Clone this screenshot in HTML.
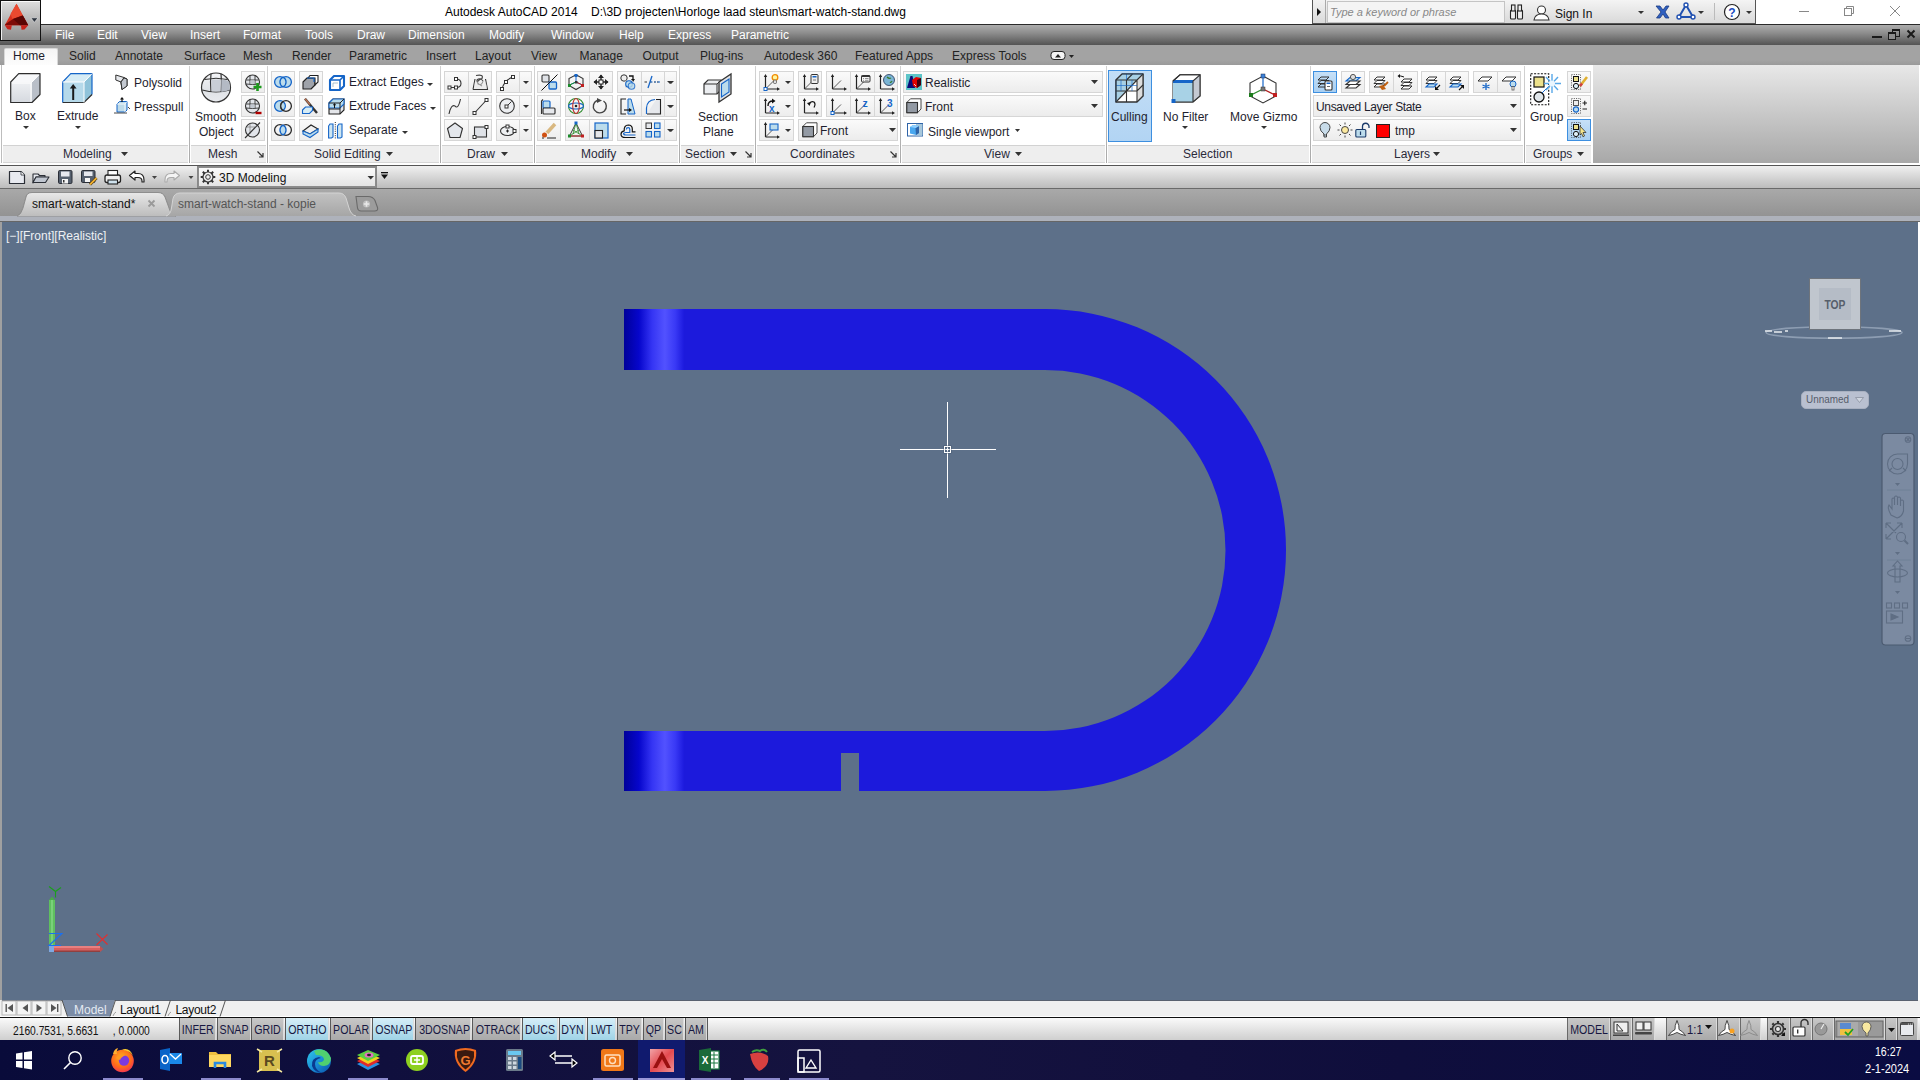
<!DOCTYPE html><html><head><meta charset="utf-8"><style>
*{margin:0;padding:0;box-sizing:border-box}
html,body{width:1920px;height:1080px;overflow:hidden;background:#5d7089;font-family:"Liberation Sans",sans-serif}
.t{position:absolute;white-space:nowrap;line-height:1}
</style></head><body><div style="position:absolute;left:0px;top:0px;width:1920px;height:24px;background:#fff"></div>
<div class="t" style="left:445px;top:6px;font-size:12px;color:#000;">Autodesk AutoCAD 2014&nbsp;&nbsp;&nbsp;&nbsp;D:\3D projecten\Horloge laad steun\smart-watch-stand.dwg</div>
<div style="position:absolute;left:0px;top:24px;width:1920px;height:1px;background:#2a2a2a"></div>
<div style="position:absolute;left:0px;top:25px;width:1920px;height:20px;background:linear-gradient(#adadad,#8d8d8d 40%,#545454)"></div>
<div style="position:absolute;left:0px;top:45px;width:1920px;height:20px;background:linear-gradient(#a3a3a3 75%,#9a9a9a)"></div>
<div style="position:absolute;left:0px;top:65px;width:1593px;height:98px;background:#fff"></div>
<div style="position:absolute;left:1593px;top:65px;width:326px;height:98px;background:linear-gradient(#e8e8e8,#a8a8a8)"></div>
<div style="position:absolute;left:1919px;top:65px;width:1px;height:98px;background:#fff"></div>
<div style="position:absolute;left:0px;top:163px;width:1920px;height:2px;background:#fff"></div>
<div style="position:absolute;left:0px;top:165px;width:1920px;height:1px;background:#555"></div>
<div style="position:absolute;left:0px;top:166px;width:1920px;height:22px;background:linear-gradient(#f0f0f0,#bcbcbc)"></div>
<div style="position:absolute;left:0px;top:188px;width:1920px;height:1px;background:#6a6a6a"></div>
<div style="position:absolute;left:0px;top:189px;width:1920px;height:27px;background:linear-gradient(#a9a9a9,#939393)"></div>
<div style="position:absolute;left:0px;top:216px;width:1920px;height:5px;background:#aeb2bb"></div>
<div style="position:absolute;left:0px;top:221px;width:1920px;height:1px;background:#666"></div>
<div style="position:absolute;left:0px;top:222px;width:2px;height:778px;background:#a0a0a0"></div>
<div style="position:absolute;left:1918px;top:222px;width:2px;height:778px;background:#fff"></div>
<div style="position:absolute;left:0px;top:1000px;width:1920px;height:17px;background:#f0f0f0"></div>
<div style="position:absolute;left:2px;top:1000px;width:1916px;height:1px;background:#5a6270"></div>
<div style="position:absolute;left:0px;top:1016px;width:1920px;height:1px;background:#fff"></div>
<div style="position:absolute;left:0px;top:1017px;width:1920px;height:1px;background:#111"></div>
<div style="position:absolute;left:0px;top:1018px;width:1920px;height:22px;background:linear-gradient(#fafafa,#cfcfcf)"></div>
<div style="position:absolute;left:0px;top:1040px;width:1920px;height:40px;background:linear-gradient(to right,#090b3a 0%,#100f3d 20%,#15133f 45%,#12103d 62%,#0f0e3c 73%,#0a0c42 100%)"></div>
<div style="position:absolute;left:0px;top:0px;width:41px;height:41px;background:#111"></div>
<div style="position:absolute;left:1px;top:1px;width:39px;height:39px;background:linear-gradient(#dcdcdc,#b4b4b4 50%,#8c8c8c);border-top:1px solid #fafafa;border-left:1px solid #f0f0f0"></div>
<svg style="position:absolute;left:0px;top:0px;" width="41" height="41" viewBox="0 0 41 41"><polygon points="16.5,3.8 28.2,25.2 4.8,25.2" fill="#d8301e"/><polygon points="16.5,3.8 22.6,15.3 12.5,19 10.5,14" fill="#ea4a30"/><polygon points="5.5,24 13,19 22.8,15.6 28.2,25.2 4.8,25.2" fill="#7e0c08"/><polygon points="13,19 22.8,15.6 28.2,25.2 20,25.2" fill="#5a0604"/><polygon points="4.8,25.2 11.8,25.2 11,29.8 7.5,29.3" fill="#c8221a"/><polygon points="21,25.2 28.2,25.2 24.5,29.5 21.5,29.8" fill="#c8221a"/><polygon points="30.8,17.8 38,17.8 34.4,22.4" fill="#2e3540" stroke="#f4f4f4" stroke-width="0.6"/></svg>
<div class="t" style="left:55px;top:29px;font-size:12px;color:#fff;">File</div>
<div class="t" style="left:97px;top:29px;font-size:12px;color:#fff;">Edit</div>
<div class="t" style="left:141px;top:29px;font-size:12px;color:#fff;">View</div>
<div class="t" style="left:190px;top:29px;font-size:12px;color:#fff;">Insert</div>
<div class="t" style="left:243px;top:29px;font-size:12px;color:#fff;">Format</div>
<div class="t" style="left:305px;top:29px;font-size:12px;color:#fff;">Tools</div>
<div class="t" style="left:357px;top:29px;font-size:12px;color:#fff;">Draw</div>
<div class="t" style="left:408px;top:29px;font-size:12px;color:#fff;">Dimension</div>
<div class="t" style="left:489px;top:29px;font-size:12px;color:#fff;">Modify</div>
<div class="t" style="left:551px;top:29px;font-size:12px;color:#fff;">Window</div>
<div class="t" style="left:619px;top:29px;font-size:12px;color:#fff;">Help</div>
<div class="t" style="left:668px;top:29px;font-size:12px;color:#fff;">Express</div>
<div class="t" style="left:731px;top:29px;font-size:12px;color:#fff;">Parametric</div>
<svg style="position:absolute;left:1870px;top:28px;" width="48" height="16" viewBox="0 0 48 16"><rect x="2" y="8" width="10" height="2" fill="#1a1a1a"/><rect x="22.5" y="1.5" width="7" height="7" fill="none" stroke="#1a1a1a" stroke-width="1"/><rect x="22" y="1" width="8" height="2" fill="#1a1a1a"/><rect x="18.5" y="4.5" width="7" height="7" fill="#8e8e8e" stroke="#1a1a1a" stroke-width="1"/><rect x="18" y="4" width="8" height="2" fill="#1a1a1a"/><path d="M37.5 2.5 L44.5 9.5 M44.5 2.5 L37.5 9.5" stroke="#1a1a1a" stroke-width="2"/></svg>
<div style="position:absolute;left:4px;top:48px;width:54px;height:17px;background:linear-gradient(#f4f4f4,#fdfdfd);border:1px solid #d8d8d8;border-bottom:none;border-radius:2px 2px 0 0"></div>
<div class="t" style="left:13px;top:50px;font-size:12px;color:#1b1b2b;">Home</div>
<div class="t" style="left:69px;top:50px;font-size:12px;color:#222;">Solid</div>
<div class="t" style="left:115px;top:50px;font-size:12px;color:#222;">Annotate</div>
<div class="t" style="left:184px;top:50px;font-size:12px;color:#222;">Surface</div>
<div class="t" style="left:243px;top:50px;font-size:12px;color:#222;">Mesh</div>
<div class="t" style="left:292px;top:50px;font-size:12px;color:#222;">Render</div>
<div class="t" style="left:349px;top:50px;font-size:12px;color:#222;">Parametric</div>
<div class="t" style="left:426px;top:50px;font-size:12px;color:#222;">Insert</div>
<div class="t" style="left:475px;top:50px;font-size:12px;color:#222;">Layout</div>
<div class="t" style="left:531px;top:50px;font-size:12px;color:#222;">View</div>
<div class="t" style="left:579.5px;top:50px;font-size:12px;color:#222;">Manage</div>
<div class="t" style="left:642.5px;top:50px;font-size:12px;color:#222;">Output</div>
<div class="t" style="left:700px;top:50px;font-size:12px;color:#222;">Plug-ins</div>
<div class="t" style="left:764px;top:50px;font-size:12px;color:#222;">Autodesk 360</div>
<div class="t" style="left:855px;top:50px;font-size:12px;color:#222;">Featured Apps</div>
<div class="t" style="left:952px;top:50px;font-size:12px;color:#222;">Express Tools</div>
<svg style="position:absolute;left:1050px;top:50px;" width="26" height="12" viewBox="0 0 26 12"><rect x="1" y="1.5" width="14" height="8" rx="3" fill="#f4f4f4" stroke="#222" stroke-width="1"/><polygon points="5,7.5 11,7.5 8,4" fill="#222"/><polygon points="19,5 24,5 21.5,8" fill="#222"/></svg>
<div style="position:absolute;left:3px;top:145px;width:185px;height:18px;background:#eeeeee;border-top:1px solid #d2d2d2;border-bottom:1px solid #d6d6d6"></div>
<div style="position:absolute;left:191px;top:145px;width:75px;height:18px;background:#eeeeee;border-top:1px solid #d2d2d2;border-bottom:1px solid #d6d6d6"></div>
<div style="position:absolute;left:269px;top:145px;width:170px;height:18px;background:#eeeeee;border-top:1px solid #d2d2d2;border-bottom:1px solid #d6d6d6"></div>
<div style="position:absolute;left:442px;top:145px;width:91px;height:18px;background:#eeeeee;border-top:1px solid #d2d2d2;border-bottom:1px solid #d6d6d6"></div>
<div style="position:absolute;left:536px;top:145px;width:142px;height:18px;background:#eeeeee;border-top:1px solid #d2d2d2;border-bottom:1px solid #d6d6d6"></div>
<div style="position:absolute;left:681px;top:145px;width:73px;height:18px;background:#eeeeee;border-top:1px solid #d2d2d2;border-bottom:1px solid #d6d6d6"></div>
<div style="position:absolute;left:757px;top:145px;width:142px;height:18px;background:#eeeeee;border-top:1px solid #d2d2d2;border-bottom:1px solid #d6d6d6"></div>
<div style="position:absolute;left:902px;top:145px;width:203px;height:18px;background:#eeeeee;border-top:1px solid #d2d2d2;border-bottom:1px solid #d6d6d6"></div>
<div style="position:absolute;left:1108px;top:145px;width:201px;height:18px;background:#eeeeee;border-top:1px solid #d2d2d2;border-bottom:1px solid #d6d6d6"></div>
<div style="position:absolute;left:1312px;top:145px;width:211px;height:18px;background:#eeeeee;border-top:1px solid #d2d2d2;border-bottom:1px solid #d6d6d6"></div>
<div style="position:absolute;left:1526px;top:145px;width:65px;height:18px;background:#eeeeee;border-top:1px solid #d2d2d2;border-bottom:1px solid #d6d6d6"></div>
<div style="position:absolute;left:189px;top:66px;width:1px;height:97px;background:linear-gradient(#d4d4d4,#a8a8a8)"></div>
<div style="position:absolute;left:267px;top:66px;width:1px;height:97px;background:linear-gradient(#d4d4d4,#a8a8a8)"></div>
<div style="position:absolute;left:440px;top:66px;width:1px;height:97px;background:linear-gradient(#d4d4d4,#a8a8a8)"></div>
<div style="position:absolute;left:534px;top:66px;width:1px;height:97px;background:linear-gradient(#d4d4d4,#a8a8a8)"></div>
<div style="position:absolute;left:679px;top:66px;width:1px;height:97px;background:linear-gradient(#d4d4d4,#a8a8a8)"></div>
<div style="position:absolute;left:755px;top:66px;width:1px;height:97px;background:linear-gradient(#d4d4d4,#a8a8a8)"></div>
<div style="position:absolute;left:900px;top:66px;width:1px;height:97px;background:linear-gradient(#d4d4d4,#a8a8a8)"></div>
<div style="position:absolute;left:1106px;top:66px;width:1px;height:97px;background:linear-gradient(#d4d4d4,#a8a8a8)"></div>
<div style="position:absolute;left:1310px;top:66px;width:1px;height:97px;background:linear-gradient(#d4d4d4,#a8a8a8)"></div>
<div style="position:absolute;left:1524px;top:66px;width:1px;height:97px;background:linear-gradient(#d4d4d4,#a8a8a8)"></div>
<div style="position:absolute;left:1px;top:65px;width:1px;height:98px;background:#bdbdbd"></div>
<div class="t" style="left:63px;top:148px;font-size:12px;color:#2a2a3a;">Modeling</div>
<svg style="position:absolute;left:121px;top:152px;" width="7" height="4" viewBox="0 0 7 4"><polygon points="0,0 7,0 3.5,4" fill="#333"/></svg>
<div class="t" style="left:208px;top:148px;font-size:12px;color:#2a2a3a;">Mesh</div>
<svg style="position:absolute;left:256px;top:150px;" width="9" height="9" viewBox="0 0 9 9"><path d="M1.5 1.5 L7 7 M7 3 V7 H3" stroke="#333" stroke-width="1.2" fill="none"/></svg>
<div class="t" style="left:314px;top:148px;font-size:12px;color:#2a2a3a;">Solid Editing</div>
<svg style="position:absolute;left:386px;top:152px;" width="7" height="4" viewBox="0 0 7 4"><polygon points="0,0 7,0 3.5,4" fill="#333"/></svg>
<div class="t" style="left:467px;top:148px;font-size:12px;color:#2a2a3a;">Draw</div>
<svg style="position:absolute;left:501px;top:152px;" width="7" height="4" viewBox="0 0 7 4"><polygon points="0,0 7,0 3.5,4" fill="#333"/></svg>
<div class="t" style="left:581px;top:148px;font-size:12px;color:#2a2a3a;">Modify</div>
<svg style="position:absolute;left:626px;top:152px;" width="7" height="4" viewBox="0 0 7 4"><polygon points="0,0 7,0 3.5,4" fill="#333"/></svg>
<div class="t" style="left:685px;top:148px;font-size:12px;color:#2a2a3a;">Section</div>
<svg style="position:absolute;left:730px;top:152px;" width="7" height="4" viewBox="0 0 7 4"><polygon points="0,0 7,0 3.5,4" fill="#333"/></svg>
<svg style="position:absolute;left:744px;top:150px;" width="9" height="9" viewBox="0 0 9 9"><path d="M1.5 1.5 L7 7 M7 3 V7 H3" stroke="#333" stroke-width="1.2" fill="none"/></svg>
<div class="t" style="left:790px;top:148px;font-size:12px;color:#2a2a3a;">Coordinates</div>
<svg style="position:absolute;left:889px;top:150px;" width="9" height="9" viewBox="0 0 9 9"><path d="M1.5 1.5 L7 7 M7 3 V7 H3" stroke="#333" stroke-width="1.2" fill="none"/></svg>
<div class="t" style="left:984px;top:148px;font-size:12px;color:#2a2a3a;">View</div>
<svg style="position:absolute;left:1015px;top:152px;" width="7" height="4" viewBox="0 0 7 4"><polygon points="0,0 7,0 3.5,4" fill="#333"/></svg>
<div class="t" style="left:1183px;top:148px;font-size:12px;color:#2a2a3a;">Selection</div>
<div class="t" style="left:1394px;top:148px;font-size:12px;color:#2a2a3a;">Layers</div>
<svg style="position:absolute;left:1433px;top:152px;" width="7" height="4" viewBox="0 0 7 4"><polygon points="0,0 7,0 3.5,4" fill="#333"/></svg>
<div class="t" style="left:1533px;top:148px;font-size:12px;color:#2a2a3a;">Groups</div>
<svg style="position:absolute;left:1577px;top:152px;" width="7" height="4" viewBox="0 0 7 4"><polygon points="0,0 7,0 3.5,4" fill="#333"/></svg>
<div style="position:absolute;left:241px;top:71px;width:24px;height:22px;background:linear-gradient(#fafafa,#ededed);border:1px solid #d6d6d6"></div>
<div style="position:absolute;left:241px;top:95px;width:24px;height:22px;background:linear-gradient(#fafafa,#ededed);border:1px solid #d6d6d6"></div>
<div style="position:absolute;left:241px;top:119px;width:24px;height:22px;background:linear-gradient(#fafafa,#ededed);border:1px solid #d6d6d6"></div>
<div style="position:absolute;left:271px;top:71px;width:24px;height:22px;background:linear-gradient(#fafafa,#ededed);border:1px solid #d6d6d6"></div>
<div style="position:absolute;left:299px;top:71px;width:24px;height:22px;background:linear-gradient(#fafafa,#ededed);border:1px solid #d6d6d6"></div>
<div style="position:absolute;left:271px;top:95px;width:24px;height:22px;background:linear-gradient(#fafafa,#ededed);border:1px solid #d6d6d6"></div>
<div style="position:absolute;left:299px;top:95px;width:24px;height:22px;background:linear-gradient(#fafafa,#ededed);border:1px solid #d6d6d6"></div>
<div style="position:absolute;left:271px;top:119px;width:24px;height:22px;background:linear-gradient(#fafafa,#ededed);border:1px solid #d6d6d6"></div>
<div style="position:absolute;left:299px;top:119px;width:24px;height:22px;background:linear-gradient(#fafafa,#ededed);border:1px solid #d6d6d6"></div>
<div style="position:absolute;left:444px;top:71px;width:48px;height:22px;background:linear-gradient(#fafafa,#ededed);border:1px solid #d6d6d6"></div>
<div style="position:absolute;left:468px;top:72px;width:1px;height:20px;background:#d6d6d6"></div>
<div style="position:absolute;left:496px;top:71px;width:36px;height:22px;background:linear-gradient(#fafafa,#ededed);border:1px solid #d6d6d6"></div>
<div style="position:absolute;left:519px;top:72px;width:1px;height:20px;background:#d6d6d6"></div>
<div style="position:absolute;left:444px;top:95px;width:48px;height:22px;background:linear-gradient(#fafafa,#ededed);border:1px solid #d6d6d6"></div>
<div style="position:absolute;left:468px;top:96px;width:1px;height:20px;background:#d6d6d6"></div>
<div style="position:absolute;left:496px;top:95px;width:36px;height:22px;background:linear-gradient(#fafafa,#ededed);border:1px solid #d6d6d6"></div>
<div style="position:absolute;left:519px;top:96px;width:1px;height:20px;background:#d6d6d6"></div>
<div style="position:absolute;left:444px;top:119px;width:48px;height:22px;background:linear-gradient(#fafafa,#ededed);border:1px solid #d6d6d6"></div>
<div style="position:absolute;left:468px;top:120px;width:1px;height:20px;background:#d6d6d6"></div>
<div style="position:absolute;left:496px;top:119px;width:36px;height:22px;background:linear-gradient(#fafafa,#ededed);border:1px solid #d6d6d6"></div>
<div style="position:absolute;left:519px;top:120px;width:1px;height:20px;background:#d6d6d6"></div>
<div style="position:absolute;left:537px;top:71px;width:24px;height:22px;background:linear-gradient(#fafafa,#ededed);border:1px solid #d6d6d6"></div>
<div style="position:absolute;left:565px;top:71px;width:48px;height:22px;background:linear-gradient(#fafafa,#ededed);border:1px solid #d6d6d6"></div>
<div style="position:absolute;left:589px;top:72px;width:1px;height:20px;background:#d6d6d6"></div>
<div style="position:absolute;left:617px;top:71px;width:60px;height:22px;background:linear-gradient(#fafafa,#ededed);border:1px solid #d6d6d6"></div>
<div style="position:absolute;left:641px;top:72px;width:1px;height:20px;background:#d6d6d6"></div>
<div style="position:absolute;left:664px;top:72px;width:1px;height:20px;background:#d6d6d6"></div>
<div style="position:absolute;left:537px;top:95px;width:24px;height:22px;background:linear-gradient(#fafafa,#ededed);border:1px solid #d6d6d6"></div>
<div style="position:absolute;left:565px;top:95px;width:48px;height:22px;background:linear-gradient(#fafafa,#ededed);border:1px solid #d6d6d6"></div>
<div style="position:absolute;left:589px;top:96px;width:1px;height:20px;background:#d6d6d6"></div>
<div style="position:absolute;left:617px;top:95px;width:60px;height:22px;background:linear-gradient(#fafafa,#ededed);border:1px solid #d6d6d6"></div>
<div style="position:absolute;left:641px;top:96px;width:1px;height:20px;background:#d6d6d6"></div>
<div style="position:absolute;left:664px;top:96px;width:1px;height:20px;background:#d6d6d6"></div>
<div style="position:absolute;left:537px;top:119px;width:24px;height:22px;background:linear-gradient(#fafafa,#ededed);border:1px solid #d6d6d6"></div>
<div style="position:absolute;left:565px;top:119px;width:48px;height:22px;background:linear-gradient(#fafafa,#ededed);border:1px solid #d6d6d6"></div>
<div style="position:absolute;left:589px;top:120px;width:1px;height:20px;background:#d6d6d6"></div>
<div style="position:absolute;left:617px;top:119px;width:60px;height:22px;background:linear-gradient(#fafafa,#ededed);border:1px solid #d6d6d6"></div>
<div style="position:absolute;left:641px;top:120px;width:1px;height:20px;background:#d6d6d6"></div>
<div style="position:absolute;left:664px;top:120px;width:1px;height:20px;background:#d6d6d6"></div>
<div style="position:absolute;left:759px;top:71px;width:35px;height:22px;background:linear-gradient(#fafafa,#ededed);border:1px solid #d6d6d6"></div>
<div style="position:absolute;left:759px;top:95px;width:35px;height:22px;background:linear-gradient(#fafafa,#ededed);border:1px solid #d6d6d6"></div>
<div style="position:absolute;left:759px;top:119px;width:35px;height:22px;background:linear-gradient(#fafafa,#ededed);border:1px solid #d6d6d6"></div>
<div style="position:absolute;left:798px;top:71px;width:24px;height:22px;background:linear-gradient(#fafafa,#ededed);border:1px solid #d6d6d6"></div>
<div style="position:absolute;left:826px;top:71px;width:72px;height:22px;background:linear-gradient(#fafafa,#ededed);border:1px solid #d6d6d6"></div>
<div style="position:absolute;left:850px;top:72px;width:1px;height:20px;background:#d6d6d6"></div>
<div style="position:absolute;left:874px;top:72px;width:1px;height:20px;background:#d6d6d6"></div>
<div style="position:absolute;left:798px;top:95px;width:24px;height:22px;background:linear-gradient(#fafafa,#ededed);border:1px solid #d6d6d6"></div>
<div style="position:absolute;left:826px;top:95px;width:72px;height:22px;background:linear-gradient(#fafafa,#ededed);border:1px solid #d6d6d6"></div>
<div style="position:absolute;left:850px;top:96px;width:1px;height:20px;background:#d6d6d6"></div>
<div style="position:absolute;left:874px;top:96px;width:1px;height:20px;background:#d6d6d6"></div>
<div style="position:absolute;left:798px;top:119px;width:100px;height:22px;background:linear-gradient(#fafafa,#ececec);border:1px solid #d6d6d6"></div>
<div style="position:absolute;left:903px;top:71px;width:200px;height:22px;background:linear-gradient(#fafafa,#ececec);border:1px solid #d6d6d6"></div>
<div style="position:absolute;left:903px;top:95px;width:200px;height:22px;background:linear-gradient(#fafafa,#ececec);border:1px solid #d6d6d6"></div>
<div style="position:absolute;left:1313px;top:71px;width:24px;height:22px;background:linear-gradient(#c6e0f7,#a9cff1);border:1px solid #3d8fe0"></div>
<div style="position:absolute;left:1341px;top:71px;width:24px;height:22px;background:linear-gradient(#fafafa,#ededed);border:1px solid #d6d6d6"></div>
<div style="position:absolute;left:1369px;top:71px;width:49px;height:22px;background:linear-gradient(#fafafa,#ededed);border:1px solid #d6d6d6"></div>
<div style="position:absolute;left:1393px;top:72px;width:1px;height:20px;background:#d6d6d6"></div>
<div style="position:absolute;left:1421px;top:71px;width:48px;height:22px;background:linear-gradient(#fafafa,#ededed);border:1px solid #d6d6d6"></div>
<div style="position:absolute;left:1445px;top:72px;width:1px;height:20px;background:#d6d6d6"></div>
<div style="position:absolute;left:1473px;top:71px;width:48px;height:22px;background:linear-gradient(#fafafa,#ededed);border:1px solid #d6d6d6"></div>
<div style="position:absolute;left:1497px;top:72px;width:1px;height:20px;background:#d6d6d6"></div>
<div style="position:absolute;left:1313px;top:95px;width:208px;height:22px;background:linear-gradient(#fafafa,#ececec);border:1px solid #d6d6d6"></div>
<div style="position:absolute;left:1313px;top:119px;width:208px;height:22px;background:linear-gradient(#fafafa,#ececec);border:1px solid #d6d6d6"></div>
<div style="position:absolute;left:1567px;top:71px;width:24px;height:22px;background:linear-gradient(#fafafa,#ededed);border:1px solid #d6d6d6"></div>
<div style="position:absolute;left:1567px;top:95px;width:24px;height:22px;background:linear-gradient(#fafafa,#ededed);border:1px solid #d6d6d6"></div>
<div style="position:absolute;left:1567px;top:119px;width:24px;height:22px;background:linear-gradient(#c6e0f7,#a9cff1);border:1px solid #3d8fe0"></div>
<div style="position:absolute;left:1108px;top:70px;width:44px;height:72px;background:linear-gradient(#c3def6,#b2d4f3);border:1px solid #3d8fe0"></div>
<svg style="position:absolute;left:0;top:0" width="1920" height="1080"><g transform="translate(10,73) scale(1)"><defs><linearGradient id="bf" x1="0" y1="0" x2="0" y2="1"><stop offset="0" stop-color="#eef0f3"/><stop offset="1" stop-color="#d5d9df"/></linearGradient></defs><polygon points="0.7,9 8.7,0.7 30,0.7 22,9" fill="#f7f8fa"/><polygon points="22,9 30,0.7 30,21.5 22,29.5" fill="#b9bfc8"/><rect x="0.7" y="9" width="21.3" height="20.5" fill="url(#bf)"/><path d="M1.8 10 H21 V28.5 M21 10 L28.8 2" fill="none" stroke="#fff" stroke-width="1"/><path d="M0.7 9 L8.7 0.7 H30 V21.5 L22 29.5 H0.7 Z" fill="none" stroke="#2e2e2e" stroke-width="1.2" stroke-linejoin="round"/></g><g transform="translate(62,73) scale(1)"><polygon points="0.7,9 8.7,0.7 30,0.7 22,9" fill="#d6ecf5"/><polygon points="22,9 30,0.7 30,21.5 22,29.5" fill="#8fc3da"/><rect x="0.7" y="9" width="21.3" height="20.5" fill="#b5d9ea"/><path d="M0.7 29.5 V9 L8.7 0.7 H30 V21.5" fill="none" stroke="#1565c8" stroke-width="1.2" stroke-linejoin="round"/><path d="M30 21.5 L22 29.5 H0.7" fill="none" stroke="#2e2e2e" stroke-width="1.2"/><path d="M0.7 9 H22 V29.5 M22 9 L30 0.7" fill="none" stroke="#fff" stroke-width="1"/><path fill="none" d="M11.2 27 V14" stroke="#1a1a1a" stroke-width="2"/><polygon points="7.8,15.5 11.2,11 14.6,15.5" fill="#1a1a1a"/></g><g transform="translate(115,74) scale(1)"><polygon points="0.8,1 9,3.5 12,5 12,12 7,15.5 6,8 0.8,6" fill="#e6e8ec" stroke="#333" stroke-width="1" stroke-linejoin="round"/><path d="M6 8 L9 3.5 M6 8 L7 15.5" stroke="#333" stroke-width="1" fill="none"/><polygon points="6,8 9,4 12,5 12,12 7,15.5" fill="#c4c9d1" stroke="#333" stroke-width="1"/></g><g transform="translate(114,97) scale(1)"><polygon points="3,7 5.5,4.5 13,4.5 13,13 11,15 3,15" fill="#bfdbe9" stroke="#1565c8" stroke-width="1"/><path d="M3 7 H11 V15 M11 7 L13 4.5" stroke="#fff" stroke-width="0.8" fill="none"/><path fill="none" d="M0 16 H13 M14 10 L16 12" stroke="#333" stroke-width="0.9"/><path fill="none" d="M8 5 V1.5" stroke="#111" stroke-width="1.2"/><polygon points="6,2.6 8,0 10,2.6" fill="#111"/></g><g transform="translate(201,72) scale(1)"><defs><linearGradient id="sg" x1="0" y1="0" x2="0" y2="1"><stop offset="0" stop-color="#f4f5f7"/><stop offset="0.6" stop-color="#dfe2e6"/><stop offset="1" stop-color="#e8eaee"/></linearGradient></defs><circle cx="15" cy="15.5" r="14.5" fill="url(#sg)" stroke="#333" stroke-width="1.2"/><path d="M1.2 18 Q15 22 28.8 18" stroke="#333" stroke-width="1.2" fill="none"/><path d="M3.5 7.5 Q15 5 26.5 7.5" stroke="#333" stroke-width="1" fill="none"/><path d="M10 1.8 Q9 10 10 20 M20 1.8 Q21 10 20 20" stroke="#333" stroke-width="1.2" fill="none"/><rect x="10.5" y="7.5" width="9" height="12" fill="#c9ced6"/><path d="M20.3 7.6 Q26 8 28.5 10 L28.6 18 Q24 19.5 20.3 20 Z" fill="#b4bac4"/></g><g transform="translate(245,74) scale(1)"><circle cx="7.5" cy="8" r="7" fill="#e2e5ea" stroke="#333" stroke-width="1.1"/><path d="M0.8 6 H14 M0.8 10 Q7.5 11 14.2 10 M5 1.5 V10.5 M10 1.5 V10.5" stroke="#333" stroke-width="0.9" fill="none"/><rect x="5.3" y="6.3" width="4.4" height="3.6" fill="#c2c8d0"/><path fill="none" d="M12.5 9 V17 M8.5 13 H16.5" stroke="#1d9a1d" stroke-width="2.6"/></g><g transform="translate(245,98) scale(1)"><circle cx="7.5" cy="8" r="7" fill="#e2e5ea" stroke="#333" stroke-width="1.1"/><path d="M0.8 6 H14 M0.8 10 Q7.5 11 14.2 10 M5 1.5 V10.5 M10 1.5 V10.5" stroke="#333" stroke-width="0.9" fill="none"/><rect x="5.3" y="6.3" width="4.4" height="3.6" fill="#c2c8d0"/><path fill="none" d="M10.5 15 H16.5" stroke="#b00000" stroke-width="2.4"/></g><g transform="translate(245,122) scale(1)"><circle cx="7.5" cy="8" r="7" fill="#e2e5ea" stroke="#333" stroke-width="1.1"/><path fill="none" d="M5 1.5 V12 M2 5 H10" stroke="#888" stroke-width="0.8"/><path fill="none" d="M0 16 L15 0.5" stroke="#333" stroke-width="1.1"/></g><g transform="translate(271,74) scale(1)"><circle cx="9" cy="8" r="5.4" fill="#bcdcec" stroke="#1565c8" stroke-width="1.3"/><circle cx="15" cy="8" r="5.4" fill="#bcdcec" stroke="#1565c8" stroke-width="1.3"/><path d="M12 3.2 A5.3 5.3 0 0 1 12 12.8 A5.3 5.3 0 0 1 12 3.2 Z" fill="#bcdcec" stroke="#1565c8" stroke-width="1.3"/></g><g transform="translate(271,98) scale(1)"><circle cx="9" cy="8" r="5.4" fill="#bcdcec" stroke="#1565c8" stroke-width="1.3"/><circle cx="15" cy="8" r="5.4" fill="none" stroke="#2b2b2b" stroke-width="1.3"/><path d="M12 3.4 A5.4 5.4 0 0 0 12 12.6" stroke="#333" stroke-width="1.2" fill="none"/></g><g transform="translate(271,122) scale(1)"><circle cx="9" cy="8" r="5.4" fill="none" stroke="#2b2b2b" stroke-width="1.3"/><circle cx="15" cy="8" r="5.4" fill="none" stroke="#2b2b2b" stroke-width="1.3"/><path d="M12 3.2 A5.3 5.3 0 0 1 12 12.8 A5.3 5.3 0 0 1 12 3.2 Z" fill="#bcdcec" stroke="#1565c8" stroke-width="1.3"/></g><g transform="translate(302,74) scale(1)"><polygon points="1,8 5,4 13,4 13,11 9,15 1,15" fill="#9fa3aa" stroke="#222" stroke-width="1.1" stroke-linejoin="round"/><polygon points="6,4 8,1.5 16,1.5 16,8 13,11 13,4" fill="#fff" stroke="#222" stroke-width="1.1"/><path d="M5 4 H12 V8" stroke="#1565c8" stroke-width="1.1" fill="none"/></g><g transform="translate(302,98) scale(1)"><path fill="none" d="M3 0.8 L15 15" stroke="#333" stroke-width="2.4"/><path fill="none" d="M3 0.8 L8 6.5" stroke="#b87050" stroke-width="1.6"/><polygon points="0.5,12 3.5,9 10.5,9 10.5,12.5 7.5,15.5 0.5,15.5" fill="#d6ecf5" stroke="#1565c8" stroke-width="1.1"/></g><g transform="translate(302,122) scale(1)"><polygon points="1,9 9,3 16,7 8,12" fill="#f0f0f0" stroke="#222" stroke-width="1.1"/><polygon points="1,9 8,12 16,7 16,10 8,15.5 1,12" fill="#bcdcec" stroke="#1565c8" stroke-width="1.1"/></g><g transform="translate(329,75) scale(1)"><polygon points="1,5 5,1 15,1 15,11 11,15 1,15" fill="#fff" stroke="#1565c8" stroke-width="2.1" stroke-linejoin="round"/><path d="M1 5 H11 V15 M11 5 L15 1" stroke="#1565c8" stroke-width="1.6" fill="none"/><path d="M4 12 V8 H9" stroke="#8ab" stroke-width="0.7" fill="none"/></g><g transform="translate(328,98) scale(1)"><polygon points="1,5 5,1 16,1 16,12 12,16 1,16" fill="#e4e6ea" stroke="#222" stroke-width="1.1"/><polygon points="1,5 5,1 16,1 16,6 12,10 1,10" fill="#b8dcee" stroke="#1565c8" stroke-width="1.1"/><path d="M1 5 H12 V16 M12 5 L16 1 M1 11 H12" stroke="#222" stroke-width="1" fill="none"/><path fill="none" d="M6.5 10 V6.5" stroke="#111" stroke-width="1"/><polygon points="4.8,7.2 6.5,5 8.2,7.2" fill="#111"/></g><g transform="translate(328,122) scale(1)"><polygon points="0.6,4 2,2 5,2 5,15 3.5,16 0.6,16" fill="#cfe6f1" stroke="#1565c8" stroke-width="1.1"/><polygon points="9.5,4 11,2 14,2 14,15 12.5,16 9.5,16" fill="#cfe6f1" stroke="#1565c8" stroke-width="1.1"/><path fill="none" d="M7.3 0 V17" stroke="#111" stroke-width="0.9" stroke-dasharray="1 1.2"/></g><g transform="translate(448,75) scale(1)"><path fill="none" d="M1.5 12.5 H8 Q13 12.5 13 8.5 Q13 4 8 4" stroke="#333" stroke-width="1.1" fill="none"/><rect x="0.0" y="11.0" width="3" height="3" fill="#fff" stroke="#333" stroke-width="1"/><rect x="6.5" y="11.0" width="3" height="3" fill="#fff" stroke="#333" stroke-width="1"/><rect x="6.5" y="2.5" width="3" height="3" fill="#fff" stroke="#333" stroke-width="1"/></g><g transform="translate(472,74) scale(1)"><path d="M1 15.5 L3 5 M13.5 5 L15.5 15.5 H1" stroke="#333" stroke-width="1.1" fill="none"/><path d="M4 1.5 Q12 0 10 4.5 Q4 7 6 10 Q10 12 11 7 Q8 3 5 6 Q4 9 10 12" stroke="#444" stroke-width="1.1" fill="none"/><path d="M2 15 H15 V12 L13 6 Q8 9 3 7 L2 13 Z" fill="#e8e8e8" opacity="0.5"/></g><g transform="translate(500,75) scale(1)"><path fill="none" d="M2 14 Q4 5 13 2" stroke="#333" stroke-width="1.1" fill="none"/><rect x="0.5" y="12.5" width="3" height="3" fill="#fff" stroke="#333" stroke-width="1"/><rect x="4.5" y="5.5" width="3" height="3" fill="#fff" stroke="#333" stroke-width="1"/><rect x="11.5" y="0.5" width="3" height="3" fill="#fff" stroke="#333" stroke-width="1"/></g><g transform="translate(447,98) scale(1)"><path d="M2 16 Q4 6 8 8 Q11 12 13.5 1" stroke="#333" stroke-width="1.1" fill="none"/></g><g transform="translate(472,98) scale(1)"><path fill="none" d="M2.5 15 L14.5 2" stroke="#333" stroke-width="1.1" fill="none"/><rect x="1.0" y="13.5" width="3" height="3" fill="#fff" stroke="#333" stroke-width="1"/><rect x="13.0" y="0.5" width="3" height="3" fill="#fff" stroke="#333" stroke-width="1"/></g><g transform="translate(499,98) scale(1)"><circle cx="8" cy="8" r="7.3" fill="#eceef1" stroke="#333" stroke-width="1.1"/><path fill="none" d="M7.5 8.5 L12.5 3.5" stroke="#333" stroke-width="1"/><rect x="6.0" y="7.0" width="3" height="3" fill="#fff" stroke="#333" stroke-width="1"/></g><g transform="translate(447,122) scale(1)"><polygon points="8,1 15.5,6.5 13,15.5 3,15.5 0.5,6.5" fill="#e4e7ec" stroke="#333" stroke-width="1.1" stroke-linejoin="round"/></g><g transform="translate(472,122) scale(1)"><rect x="2.5" y="5" width="12" height="10" fill="#dfe2e7" stroke="#333" stroke-width="1.1"/><rect x="13.0" y="3.5" width="3" height="3" fill="#fff" stroke="#333" stroke-width="1"/><rect x="1.0" y="13.5" width="3" height="3" fill="#fff" stroke="#333" stroke-width="1"/></g><g transform="translate(500,123) scale(1)"><ellipse cx="7.5" cy="8" rx="7" ry="4.5" fill="#eef0f2" stroke="#333" stroke-width="1.1"/><path fill="none" d="M7.5 6.5 V9.5 M6 8 H9" stroke="#222" stroke-width="1"/><rect x="6.0" y="2.0" width="3" height="3" fill="#fff" stroke="#333" stroke-width="1"/><rect x="13.0" y="6.5" width="3" height="3" fill="#fff" stroke="#333" stroke-width="1"/></g><g transform="translate(541,74) scale(1)"><rect x="1" y="1" width="7" height="7" rx="1" fill="#dfe2e7" stroke="#333" stroke-width="1.1"/><rect x="8" y="8" width="7.5" height="7" rx="1" fill="#bcdcec" stroke="#1565c8" stroke-width="1.3"/><path fill="none" d="M0.5 16.5 L16.5 0.5" stroke="#111" stroke-width="1"/></g><g transform="translate(568,74) scale(1)"><polygon points="8,0.8 15,4.5 15,11.5 8,15.5 1,11.5 1,4.5" fill="none" stroke="#333" stroke-width="1.1"/><path fill="none" d="M8 1 V8 M1.5 11 L8 8 L14.5 11" stroke="#1565c8" stroke-width="1"/><path fill="none" d="M1.5 11 L8 8" stroke="#1b8a2a"/><path fill="none" d="M14.5 11 L8 8" stroke="#c02020"/><rect x="6.5" y="0" width="3" height="3" fill="#1565c8"/><rect x="0" y="10" width="3" height="3" fill="#1b8a2a"/><rect x="13" y="10" width="3" height="3" fill="#c02020"/><rect x="7" y="7" width="2.5" height="2.5" fill="#333"/></g><g transform="translate(593,74) scale(1)"><path fill="none" d="M8 1 V15 M1 8 H15" stroke="#222" stroke-width="1.4"/><polygon points="5,4 8,0.5 11,4" fill="#222"/><polygon points="5,12 8,15.5 11,12" fill="#222"/><polygon points="4,5 0.5,8 4,11" fill="#222"/><polygon points="12,5 15.5,8 12,11" fill="#222"/><rect x="6" y="6" width="4" height="4" fill="#fff" stroke="#222"/></g><g transform="translate(620,74) scale(1)"><circle cx="4" cy="4" r="3.2" fill="#eee" stroke="#333" stroke-width="1"/><path d="M9 2 H13 V6" stroke="#111" stroke-width="1.3" fill="none"/><polygon points="11,5 13,8 15,5" fill="#111"/><rect x="5" y="6.5" width="8" height="7" fill="#ccc" opacity="0.7"/><circle cx="9" cy="10" r="3.3" fill="#bcdcec" stroke="#1565c8" stroke-width="1.1"/><circle cx="11.5" cy="12" r="3.3" fill="#bcdcec" stroke="#1565c8" stroke-width="1.1" opacity="0.8"/></g><g transform="translate(644,74) scale(1)"><path fill="none" d="M0.5 8 H3 M10 8 H11.5 M13 8 H14.5 M6 8 H7.5" stroke="#333" stroke-width="1.2"/><path fill="none" d="M4 14 L8 2" stroke="#1565c8" stroke-width="1.3"/><path fill="none" d="M7 8 H8.5 M10.5 8 H12 M13.5 8 H16" stroke="#1565c8" stroke-width="1.2"/></g><g transform="translate(540,98) scale(1)"><path d="M1.5 16 V3 L3 1.5" stroke="#333" stroke-width="1.1" fill="none"/><rect x="3" y="3" width="7" height="7" rx="1" fill="#bcdcec" stroke="#1565c8" stroke-width="1.2"/><rect x="3" y="10" width="12" height="6" rx="1" fill="#e6e8ec" stroke="#333" stroke-width="1.2"/></g><g transform="translate(568,98) scale(1)"><circle cx="8" cy="8" r="7.5" fill="none" stroke="#2a8a2a" stroke-width="1.1"/><ellipse cx="8" cy="8" rx="7.5" ry="3" fill="none" stroke="#1565c8" stroke-width="1.1"/><ellipse cx="8" cy="8" rx="3.3" ry="7.5" fill="none" stroke="#c03030" stroke-width="1.1"/><circle cx="8" cy="8" r="1.3" fill="#222"/></g><g transform="translate(592,98) scale(1)"><path d="M11.5 3 A6.5 6.5 0 1 1 5 2.5" stroke="#444" stroke-width="1.4" fill="none"/><polygon points="5,0 10,2.5 5,5" fill="#444"/></g><g transform="translate(620,98) scale(1)"><path d="M6 1 H1 V16 H6" stroke="#222" stroke-width="1.1" fill="none"/><polygon points="8,1 11,1 15,16 8,16" fill="#bcdcec" stroke="#1565c8" stroke-width="1"/><path fill="none" d="M4 12 H11" stroke="#111" stroke-width="1.2"/><polygon points="9,10 12,12 9,14" fill="#111"/></g><g transform="translate(645,98) scale(1)"><path d="M1.5 16 V10 Q2 2 10 1.5" stroke="#1565c8" stroke-width="1.2" fill="none"/><path d="M2 16 H15.5 V1.5 H11" stroke="#222" stroke-width="1.1" fill="#e6e8ec"/></g><g transform="translate(541,122) scale(1)"><path fill="none" d="M1 16 H3 M6 16 H15" stroke="#222" stroke-width="1"/><path fill="none" d="M4 13 L14 2" stroke="#d9b880" stroke-width="3.5"/><path fill="none" d="M4 13 L6 11" stroke="#fff" stroke-width="3.8"/><circle cx="3.5" cy="13" r="2.5" fill="#d05010"/></g><g transform="translate(568,121) scale(1)"><path d="M8 2 L1.5 15 H14.5 Z" fill="none" stroke="#222" stroke-width="0.9"/><path fill="none" d="M8 2 L5 13 M8 2 L11 13 M1.5 15 L11 9 M14.5 15 L5 9" stroke="#2a8a2a" stroke-width="0.8"/><path fill="none" d="M1.5 15 H14.5" stroke="#c03030"/><rect x="6.5" y="0.5" width="3" height="3" fill="#1565c8"/><rect x="0" y="13.5" width="3" height="3" fill="#1b8a2a"/><rect x="13" y="13.5" width="3" height="3" fill="#c02020"/></g><g transform="translate(592,122) scale(1)"><rect x="3" y="1" width="13" height="15" fill="#bcdcec" stroke="#1565c8" stroke-width="1.2"/><rect x="3" y="8.5" width="7.5" height="7.5" fill="#e4e6ea" stroke="#222" stroke-width="1.1"/></g><g transform="translate(620,122) scale(1)"><path fill="none" d="M15.5 15.5 H5.5 Q1 15.5 1 12.3 Q1 9.3 4.2 8.8 Q3.8 3.2 8.3 3 Q12.3 3 12.3 7 V9.8 H15.5" stroke="#111" stroke-width="1.2"/><path fill="none" d="M15.5 13 H5.8 Q3.6 13 3.6 11.6 Q3.6 10.5 6 10.5 H9.8 V7.2 Q9.8 5.6 8.2 5.6 Q6.4 5.6 6.3 7.5" stroke="#1565c8" stroke-width="1.2"/></g><g transform="translate(645,122) scale(1)"><rect x="1" y="1" width="5.5" height="5.5" fill="#e6e8ec" stroke="#333" stroke-width="1"/><rect x="9.5" y="1" width="5.5" height="5.5" fill="#bcdcec" stroke="#1565c8" stroke-width="1.1"/><rect x="1" y="9.5" width="5.5" height="5.5" fill="#bcdcec" stroke="#1565c8" stroke-width="1.1"/><rect x="9.5" y="9.5" width="5.5" height="5.5" fill="#bcdcec" stroke="#1565c8" stroke-width="1.1"/></g><g transform="translate(703,73) scale(1)"><polygon points="1,11 5,7 18,7 18,17 14,21 1,21" fill="#eceef1" stroke="#333" stroke-width="1.2"/><path d="M1 11 H14 V21 M14 11 L18 7" stroke="#333" stroke-width="1" fill="none"/><polygon points="16,9 28,1 28,21 16,29" fill="#dfe2e6" stroke="#333" stroke-width="1.3"/><polygon points="18.5,11 26,6 26,19 18.5,24" fill="#bcdcec" stroke="#1565c8" stroke-width="1.1"/></g><g transform="translate(763,74) scale(1)"><path d="M2.5 15 V2 M2.5 15 H15" stroke="#222" stroke-width="1.2" fill="none"/><polygon points="0.8,3 2.5,0 4.2,3" fill="#222"/><polygon points="14,13.3 17,15 14,16.7" fill="#222"/><path fill="none" d="M2.5 15 L11 6.5" stroke="#333" stroke-width="0.8"/><rect x="1" y="13.5" width="3" height="3" fill="#fff" stroke="#1565c8" stroke-width="1"/><circle cx="12" cy="3.5" r="2.8" fill="#fff7a0" stroke="#f08a00" stroke-width="1.3"/><rect x="10.5" y="6" width="3" height="3.5" rx="1" fill="#ddd" stroke="#444" stroke-width="0.7"/></g><g transform="translate(802,74) scale(1)"><path d="M2.5 15 V2 M2.5 15 H15" stroke="#222" stroke-width="1.2" fill="none"/><polygon points="0.8,3 2.5,0 4.2,3" fill="#222"/><polygon points="14,13.3 17,15 14,16.7" fill="#222"/><path fill="none" d="M2.5 15 L11 6.5" stroke="#333" stroke-width="0.8"/><rect x="9" y="0.5" width="7" height="9" rx="1" fill="#eee" stroke="#333" stroke-width="1"/><rect x="10.5" y="2" width="4" height="1.5" fill="#1565c8"/><path fill="none" d="M11 6 H14" stroke="#555" stroke-width="0.8"/></g><g transform="translate(830,74) scale(1)"><path d="M2.5 15 V2 M2.5 15 H15" stroke="#222" stroke-width="1.2" fill="none"/><polygon points="0.8,3 2.5,0 4.2,3" fill="#222"/><polygon points="14,13.3 17,15 14,16.7" fill="#222"/><path fill="none" d="M2.5 15 L11 6.5" stroke="#333" stroke-width="0.8"/></g><g transform="translate(854,74) scale(1)"><path d="M2.5 15 V2 M2.5 15 H15" stroke="#222" stroke-width="1.2" fill="none"/><polygon points="0.8,3 2.5,0 4.2,3" fill="#222"/><polygon points="14,13.3 17,15 14,16.7" fill="#222"/><path fill="none" d="M2.5 15 L11 6.5" stroke="#333" stroke-width="0.8"/><rect x="7.5" y="1.5" width="8.5" height="6.5" rx="1" fill="#f4f4f4" stroke="#333" stroke-width="1"/><rect x="7.5" y="1.5" width="8.5" height="1.5" fill="#333"/><path fill="none" d="M9 4.5 H10 M11 4.5 H14.5 M9 6.3 H10 M11 6.3 H14.5" stroke="#555" stroke-width="0.6"/></g><g transform="translate(878,74) scale(1)"><path d="M2.5 15 V2 M2.5 15 H15" stroke="#222" stroke-width="1.2" fill="none"/><polygon points="0.8,3 2.5,0 4.2,3" fill="#222"/><polygon points="14,13.3 17,15 14,16.7" fill="#222"/><circle cx="11" cy="6" r="5.5" fill="#7ab4d4" stroke="#235" stroke-width="0.8"/><path d="M9 3 Q11 5 13 4 M12 8 Q13 9 14 7" stroke="#3a7a2a" stroke-width="1.2" fill="none"/></g><g transform="translate(763,98) scale(1)"><path d="M2.5 15 V2 M2.5 15 H15" stroke="#222" stroke-width="1.2" fill="none"/><polygon points="0.8,3 2.5,0 4.2,3" fill="#222"/><polygon points="14,13.3 17,15 14,16.7" fill="#222"/><path d="M5 8 Q5 3 10 3" stroke="#111" stroke-width="1.4" fill="none"/><polygon points="9,0.5 12.5,3 9,5.5" fill="#111"/><text x="6" y="14" font-size="10" font-weight="bold" fill="#1565c8" font-family="Liberation Sans">x</text></g><g transform="translate(802,98) scale(1)"><path d="M2.5 15 V2 M2.5 15 H15" stroke="#222" stroke-width="1.2" fill="none"/><polygon points="0.8,3 2.5,0 4.2,3" fill="#222"/><polygon points="14,13.3 17,15 14,16.7" fill="#222"/><path d="M7 6 Q9 2.5 12 4 Q14 6 12 9.5" stroke="#111" stroke-width="1.2" fill="none"/><polygon points="5,5 9,4 7.5,8" fill="#111"/></g><g transform="translate(830,98) scale(1)"><path d="M2.5 15 V2 M2.5 15 H15" stroke="#222" stroke-width="1.2" fill="none"/><polygon points="0.8,3 2.5,0 4.2,3" fill="#222"/><polygon points="14,13.3 17,15 14,16.7" fill="#222"/><path fill="none" d="M2.5 15 L11 6.5" stroke="#333" stroke-width="0.8"/><rect x="1" y="13.5" width="3" height="3" fill="#fff" stroke="#1565c8" stroke-width="1"/></g><g transform="translate(854,98) scale(1)"><path d="M2.5 15 V2 M2.5 15 H15" stroke="#222" stroke-width="1.2" fill="none"/><polygon points="0.8,3 2.5,0 4.2,3" fill="#222"/><polygon points="14,13.3 17,15 14,16.7" fill="#222"/><path fill="none" d="M2.5 15 L11 6.5" stroke="#333" stroke-width="0.8"/><text x="8.5" y="8.5" font-size="10.5" font-weight="bold" fill="#1565c8" font-family="Liberation Sans">z</text></g><g transform="translate(878,98) scale(1)"><path d="M2.5 15 V2 M2.5 15 H15" stroke="#222" stroke-width="1.2" fill="none"/><polygon points="0.8,3 2.5,0 4.2,3" fill="#222"/><polygon points="14,13.3 17,15 14,16.7" fill="#222"/><path fill="none" d="M2.5 15 L11 6.5" stroke="#333" stroke-width="0.8"/><text x="9" y="8.5" font-size="10" font-weight="bold" fill="#1565c8" font-family="Liberation Sans">3</text></g><g transform="translate(763,122) scale(1)"><path d="M2.5 15 V2 M2.5 15 H15" stroke="#222" stroke-width="1.2" fill="none"/><polygon points="0.8,3 2.5,0 4.2,3" fill="#222"/><polygon points="14,13.3 17,15 14,16.7" fill="#222"/><path fill="none" d="M2.5 15 L11 6.5" stroke="#333" stroke-width="0.8"/><rect x="7" y="2" width="8" height="6" fill="#bcdcec" stroke="#1565c8" stroke-width="1.1"/></g><g transform="translate(802,122) scale(1)"><polygon points="0.8,4.5 4.5,0.8 15,0.8 15,11 11.5,14.7 0.8,14.7" fill="#fff" stroke="#333" stroke-width="0.9"/><rect x="0.8" y="4.5" width="10.7" height="10.2" fill="#939aa4" stroke="#333" stroke-width="1.1"/></g><g transform="translate(906,74) scale(1)"><rect x="0" y="0" width="16" height="16" fill="#5cc4c8"/><polygon points="1,14 4.5,2 6.5,2 9,14" fill="#0a0a78"/><polygon points="6,6 10,3 15,4 15,11 11,14 7,12" fill="#e00000"/><polygon points="11,6 15,4 15,11 11,14" fill="#400010"/><path fill="none" d="M8 10 L10 12" stroke="#fff" stroke-width="0.8"/></g><g transform="translate(906,98) scale(1)"><polygon points="0.8,4.5 4.5,0.8 15,0.8 15,11 11.5,14.7 0.8,14.7" fill="#fff" stroke="#333" stroke-width="0.9"/><rect x="0.8" y="4.5" width="10.7" height="10.2" fill="#939aa4" stroke="#333" stroke-width="1.1"/></g><g transform="translate(907,123) scale(1)"><rect x="0.5" y="0.5" width="15" height="12.5" fill="#fff" stroke="#2f64a8" stroke-width="1"/><rect x="9" y="1" width="6.5" height="11.5" fill="#a8c8dc"/><polygon points="3,4 6,2 12,3 12,10 9,12 3,10.5" fill="#4aa8f0"/><polygon points="8.5,5 12,3 12,10 9,12" fill="#2f64a8"/><polygon points="3,4 6,2 12,3 8.5,5" fill="#8fd0ff"/></g><g transform="translate(1115,73) scale(1)"><polygon points="1,7 7,1 28,1 28,23 22,29 1,29" fill="#fff" stroke="#333" stroke-width="1.1"/><polygon points="1,7 7,1 28,1 22,7 1,29" fill="#a8d0e4"/><polygon points="22,7 28,1 28,23 22,29" fill="#ddd"/><path d="M1 7 H22 V29 M22 7 L28 1 M1 18 H22 L28 12 M11.5 7 V29 M11.5 7 L17.5 1 M1 29 L22 7" stroke="#333" stroke-width="1.1" fill="none"/><path d="M1 7 L7 1 H28 M1 29 V7 M11.5 1 V7 M6 7 V18 M17 7 V18 M1 12.5 H22" stroke="#1565c8" stroke-width="0.8" fill="none" opacity="0.8"/><polygon points="1,7 7,1 28,1 28,23 22,29 1,29" fill="none" stroke="#333" stroke-width="1.2"/></g><g transform="translate(1172,74) scale(1)"><polygon points="1,7 8,0.8 28,0.8 28,22 21,28 1,28" fill="#fff" stroke="#333" stroke-width="1.1"/><polygon points="21,7 28,0.8 28,22 21,28" fill="#c4c9d2"/><rect x="1" y="7" width="20" height="21" fill="#a8d2e6"/><rect x="1" y="6" width="20" height="3" fill="#1565c8"/><path d="M1 28 H21 L28 22 V0.8 H8 L1 7 M21 7 V28 M21 7 L28 0.8" stroke="#333" stroke-width="1.1" fill="none"/><rect x="-0.5" y="25" width="4" height="4" fill="#1565c8"/></g><g transform="translate(1249,74) scale(1)"><polygon points="14,2 27,9 27,22 14,29 1,22 1,9" fill="none" stroke="#333" stroke-width="1.1"/><path fill="none" d="M14 2 V15" stroke="#1565c8" stroke-width="1.2"/><path fill="none" d="M14 15 L2 21" stroke="#2a8a2a" stroke-width="1.3"/><path fill="none" d="M14 15 L26 21" stroke="#b02020" stroke-width="1.3"/><rect x="12" y="0" width="4" height="4" fill="#3a80d8" stroke="#235" stroke-width="0.5"/><rect x="12" y="13" width="4" height="4" fill="#777" stroke="#333" stroke-width="0.5"/><rect x="0" y="19" width="4" height="4" fill="#1a7a1a"/><rect x="24" y="19" width="4" height="4" fill="#c02020"/></g><g transform="translate(1317,74) scale(1)"><polygon points="1,6 4,3 12,3 9,6" fill="none" stroke="#333" stroke-width="1"/><polygon points="1,9.5 4,6.5 12,6.5 9,9.5" fill="none" stroke="#333" stroke-width="1"/><polygon points="1,13 4,10 12,10 9,13" fill="none" stroke="#333" stroke-width="1"/><rect x="8" y="7" width="7" height="9" rx="1" fill="#fff" stroke="#333" stroke-width="1.1"/><rect x="9.5" y="8.5" width="4" height="1.5" fill="#1565c8"/><path fill="none" d="M10 12.5 H13" stroke="#444" stroke-width="0.8"/></g><g transform="translate(1345,74) scale(1)"><polygon points="1,7 5,3.5 15,3.5 11,7" fill="#bcdcec" stroke="#1565c8" stroke-width="1.1"/><polygon points="1,10.5 5,7 15,7 11,10.5" fill="#fff" stroke="#333" stroke-width="1.1"/><polygon points="1,14 5,10.5 15,10.5 11,14" fill="#fff" stroke="#333" stroke-width="1.1"/><circle cx="8" cy="3" r="2.6" fill="#ddd" stroke="#444" stroke-width="0.9"/></g><g transform="translate(1373,74) scale(1)"><polygon points="1,6 4,3 12,3 9,6" fill="#fff" stroke="#333" stroke-width="1"/><polygon points="1,9.5 4,6.5 12,6.5 9,9.5" fill="#fff" stroke="#333" stroke-width="1"/><polygon points="1,13 4,10 12,10 9,13" fill="#fff" stroke="#333" stroke-width="1"/><polygon points="6,12 10,11 13,15 9,16" fill="#c06010"/><path fill="none" d="M11 12 L15 8" stroke="#c06010" stroke-width="1.8"/></g><g transform="translate(1397,74) scale(1)"><polygon points="4,8 7,5 15,5 12,8" fill="#fff" stroke="#333" stroke-width="1"/><polygon points="4,11.5 7,8.5 15,8.5 12,11.5" fill="#fff" stroke="#333" stroke-width="1"/><polygon points="4,15 7,12 15,12 12,15" fill="#fff" stroke="#333" stroke-width="1"/><path d="M7 3 Q3 1.5 2 2" stroke="#111" stroke-width="1" fill="none"/><polygon points="0.5,2 3,0 3,4" fill="#111"/></g><g transform="translate(1425,74) scale(1)"><polygon points="1,6 4,3 12,3 9,6" fill="#fff" stroke="#333" stroke-width="1"/><polygon points="1,9.5 4,6.5 12,6.5 9,9.5" fill="#fff" stroke="#333" stroke-width="1"/><polygon points="1,13 4,10 12,10 9,13" fill="#bcdcec" stroke="#1565c8" stroke-width="1.1"/><path fill="none" d="M15 11 L11 15" stroke="#111" stroke-width="1.1"/><polygon points="10,12 10,16 14,16" fill="#111"/></g><g transform="translate(1449,74) scale(1)"><polygon points="1,6 4,3 12,3 9,6" fill="#fff" stroke="#333" stroke-width="1"/><polygon points="1,9.5 4,6.5 12,6.5 9,9.5" fill="#fff" stroke="#333" stroke-width="1"/><polygon points="1,13 4,10 12,10 9,13" fill="#bcdcec" stroke="#1565c8" stroke-width="1.1"/><path fill="none" d="M10 16 L14 12" stroke="#111" stroke-width="1.1"/><polygon points="11,11 15,11 15,15" fill="#111"/></g><g transform="translate(1477,75) scale(1)"><polygon points="1,6 5,2 15,2 11,6" fill="#fff" stroke="#333" stroke-width="1"/><path fill="none" d="M9 8 V15 M5.5 10 L12.5 13 M12.5 10 L5.5 13" stroke="#1565c8" stroke-width="1.3"/></g><g transform="translate(1501,75) scale(1)"><polygon points="1,6 5,2 15,2 11,6" fill="#fff" stroke="#333" stroke-width="1"/><circle cx="12" cy="9" r="3" fill="#bcdcec" stroke="#1565c8" stroke-width="1"/><rect x="11" y="11.5" width="2" height="3.5" fill="#fff" stroke="#555" stroke-width="0.8"/></g><g transform="translate(1319,122) scale(1)"><path d="M5 15 V12 Q1 9 1 5.5 A5 5 0 0 1 11 5.5 Q11 9 7.5 12 V15 Z" fill="#c8dcea" stroke="#333" stroke-width="0.9"/><path fill="none" d="M4 13 H8" stroke="#333" stroke-width="0.7"/></g><g transform="translate(1337,122) scale(1)"><circle cx="8" cy="8" r="3.5" fill="#fce9a0" stroke="#333" stroke-width="0.9"/><path fill="none" d="M8 0.5 V2.5 M8 13.5 V15.5 M0.5 8 H2.5 M13.5 8 H15.5 M2.5 2.5 L4 4 M12 12 L13.5 13.5 M2.5 13.5 L4 12 M12 4 L13.5 2.5" stroke="#333" stroke-width="0.9"/></g><g transform="translate(1355,123) scale(1)"><rect x="0.8" y="6.5" width="10" height="7.5" rx="1" fill="#bcdcec" stroke="#1a3a6a" stroke-width="1.1"/><path d="M7.5 6.5 V3.5 A3.2 3.2 0 0 1 14 3.5 V5" stroke="#1a3a6a" stroke-width="1.3" fill="none"/><path fill="none" d="M5.5 8.5 V12" stroke="#1a3a6a" stroke-width="1.2"/></g><g transform="translate(1530,73) scale(1)"><rect x="0.7" y="0.7" width="18" height="31" fill="none" stroke="#111" stroke-width="1.1" stroke-dasharray="2 1.4"/><rect x="4" y="4" width="10" height="10" fill="#ece08a" stroke="#111" stroke-width="1.2"/><circle cx="9" cy="24" r="5" fill="#e0e6ea" stroke="#111" stroke-width="1.3"/><path fill="none" d="M12 20 L18 14" stroke="#1565c8" stroke-width="1"/><path fill="none" d="M22 1 V20 M14 10.5 H31 M16 4 L28 17 M28 4 L16 17" stroke="#58a8e8" stroke-width="1.4"/><circle cx="22" cy="10.5" r="3" fill="#eaf6ff"/></g><g transform="translate(1571,74) scale(1)"><rect x="0.5" y="0.5" width="9" height="15" fill="none" stroke="#333" stroke-width="0.8" stroke-dasharray="1 1.3"/><rect x="2.5" y="2.5" width="5" height="5" fill="#ece08a" stroke="#111" stroke-width="1"/><circle cx="5" cy="12" r="2.6" fill="#dfeff7" stroke="#111" stroke-width="1"/><path fill="none" d="M9 12 L16 3" stroke="#e0b030" stroke-width="2.6"/><path fill="none" d="M9 12 L11 9.5" stroke="#d04040" stroke-width="2.6"/></g><g transform="translate(1571,98) scale(1)"><rect x="0.5" y="0.5" width="9" height="15" fill="none" stroke="#333" stroke-width="0.8" stroke-dasharray="1 1.3"/><rect x="2.5" y="2.5" width="5" height="5" fill="#eee" stroke="#555" stroke-width="1"/><circle cx="5" cy="11.5" r="2.6" fill="#bcdcec" stroke="#1565c8" stroke-width="1.1"/><path fill="none" d="M11.5 5 H16 M13.75 2.8 V7.2 M11.5 11 H16" stroke="#222" stroke-width="1.1"/></g><g transform="translate(1571,122) scale(1)"><rect x="0.5" y="0.5" width="9" height="15" fill="none" stroke="#333" stroke-width="0.8" stroke-dasharray="1 1.3"/><rect x="2.5" y="2.5" width="5" height="5" fill="#ece08a" stroke="#111" stroke-width="1"/><circle cx="5" cy="12" r="2.6" fill="#dfeff7" stroke="#111" stroke-width="1"/><polygon points="9,4 15,10.5 12,10.5 13.5,14 12,14.8 10.5,11.5 9,13" fill="#f5e58a" stroke="#333" stroke-width="0.8"/></g></svg>
<div class="t" style="left:15px;top:110px;font-size:12px;color:#1e1e2e;">Box</div>
<svg style="position:absolute;left:23px;top:126px;" width="6" height="3" viewBox="0 0 6 3"><polygon points="0,0 6,0 3.0,3" fill="#333"/></svg>
<div class="t" style="left:57px;top:110px;font-size:12px;color:#1e1e2e;">Extrude</div>
<svg style="position:absolute;left:75px;top:126px;" width="6" height="3" viewBox="0 0 6 3"><polygon points="0,0 6,0 3.0,3" fill="#333"/></svg>
<div class="t" style="left:134px;top:77px;font-size:12px;color:#1e1e2e;">Polysolid</div>
<div class="t" style="left:134px;top:101px;font-size:12px;color:#1e1e2e;">Presspull</div>
<div class="t" style="left:195px;top:111px;font-size:12px;color:#1e1e2e;">Smooth</div>
<div class="t" style="left:199px;top:125.5px;font-size:12px;color:#1e1e2e;">Object</div>
<div class="t" style="left:349px;top:76px;font-size:12px;color:#1e1e2e;">Extract Edges</div>
<svg style="position:absolute;left:427px;top:83px;" width="6" height="3" viewBox="0 0 6 3"><polygon points="0,0 6,0 3.0,3" fill="#333"/></svg>
<div class="t" style="left:349px;top:100px;font-size:12px;color:#1e1e2e;">Extrude Faces</div>
<svg style="position:absolute;left:430px;top:107px;" width="6" height="3" viewBox="0 0 6 3"><polygon points="0,0 6,0 3.0,3" fill="#333"/></svg>
<div class="t" style="left:349px;top:124px;font-size:12px;color:#1e1e2e;">Separate</div>
<svg style="position:absolute;left:402px;top:131px;" width="6" height="3" viewBox="0 0 6 3"><polygon points="0,0 6,0 3.0,3" fill="#333"/></svg>
<svg style="position:absolute;left:523px;top:81px;" width="6" height="3" viewBox="0 0 6 3"><polygon points="0,0 6,0 3.0,3" fill="#333"/></svg>
<svg style="position:absolute;left:667px;top:81px;" width="6" height="3" viewBox="0 0 6 3"><polygon points="0,0 6,0 3.0,3" fill="#333"/></svg>
<svg style="position:absolute;left:523px;top:105px;" width="6" height="3" viewBox="0 0 6 3"><polygon points="0,0 6,0 3.0,3" fill="#333"/></svg>
<svg style="position:absolute;left:667px;top:105px;" width="6" height="3" viewBox="0 0 6 3"><polygon points="0,0 6,0 3.0,3" fill="#333"/></svg>
<svg style="position:absolute;left:523px;top:129px;" width="6" height="3" viewBox="0 0 6 3"><polygon points="0,0 6,0 3.0,3" fill="#333"/></svg>
<svg style="position:absolute;left:667px;top:129px;" width="6" height="3" viewBox="0 0 6 3"><polygon points="0,0 6,0 3.0,3" fill="#333"/></svg>
<svg style="position:absolute;left:668px;top:81px;" width="6" height="3" viewBox="0 0 6 3"><polygon points="0,0 6,0 3.0,3" fill="#333"/></svg>
<svg style="position:absolute;left:668px;top:105px;" width="6" height="3" viewBox="0 0 6 3"><polygon points="0,0 6,0 3.0,3" fill="#333"/></svg>
<svg style="position:absolute;left:668px;top:129px;" width="6" height="3" viewBox="0 0 6 3"><polygon points="0,0 6,0 3.0,3" fill="#333"/></svg>
<div class="t" style="left:698px;top:111px;font-size:12px;color:#1e1e2e;">Section</div>
<div class="t" style="left:703px;top:126px;font-size:12px;color:#1e1e2e;">Plane</div>
<svg style="position:absolute;left:785px;top:81px;" width="6" height="3" viewBox="0 0 6 3"><polygon points="0,0 6,0 3.0,3" fill="#333"/></svg>
<svg style="position:absolute;left:785px;top:105px;" width="6" height="3" viewBox="0 0 6 3"><polygon points="0,0 6,0 3.0,3" fill="#333"/></svg>
<svg style="position:absolute;left:785px;top:129px;" width="6" height="3" viewBox="0 0 6 3"><polygon points="0,0 6,0 3.0,3" fill="#333"/></svg>
<div class="t" style="left:820px;top:125px;font-size:12px;color:#1e1e2e;">Front</div>
<svg style="position:absolute;left:889px;top:128px;" width="7" height="4" viewBox="0 0 7 4"><polygon points="0,0 7,0 3.5,4" fill="#333"/></svg>
<div class="t" style="left:925px;top:77px;font-size:12px;color:#1e1e2e;">Realistic</div>
<svg style="position:absolute;left:1091px;top:80px;" width="7" height="4" viewBox="0 0 7 4"><polygon points="0,0 7,0 3.5,4" fill="#333"/></svg>
<div class="t" style="left:925px;top:101px;font-size:12px;color:#1e1e2e;">Front</div>
<svg style="position:absolute;left:1091px;top:104px;" width="7" height="4" viewBox="0 0 7 4"><polygon points="0,0 7,0 3.5,4" fill="#333"/></svg>
<div class="t" style="left:928px;top:126px;font-size:12px;color:#1e1e2e;">Single viewport</div>
<svg style="position:absolute;left:1015px;top:129px;" width="5" height="3" viewBox="0 0 5 3"><polygon points="0,0 5,0 2.5,3" fill="#333"/></svg>
<div class="t" style="left:1111px;top:111px;font-size:12px;color:#1e1e2e;">Culling</div>
<div class="t" style="left:1163px;top:111px;font-size:12px;color:#1e1e2e;">No Filter</div>
<svg style="position:absolute;left:1182px;top:126px;" width="6" height="3" viewBox="0 0 6 3"><polygon points="0,0 6,0 3.0,3" fill="#333"/></svg>
<div class="t" style="left:1230px;top:111px;font-size:12px;color:#1e1e2e;">Move Gizmo</div>
<svg style="position:absolute;left:1261px;top:126px;" width="6" height="3" viewBox="0 0 6 3"><polygon points="0,0 6,0 3.0,3" fill="#333"/></svg>
<div class="t" style="left:1316px;top:101px;font-size:12px;color:#1e1e2e;letter-spacing:-0.35px">Unsaved Layer State</div>
<svg style="position:absolute;left:1510px;top:104px;" width="7" height="4" viewBox="0 0 7 4"><polygon points="0,0 7,0 3.5,4" fill="#333"/></svg>
<div class="t" style="left:1395px;top:125px;font-size:12px;color:#1e1e2e;">tmp</div>
<svg style="position:absolute;left:1510px;top:128px;" width="7" height="4" viewBox="0 0 7 4"><polygon points="0,0 7,0 3.5,4" fill="#333"/></svg>
<div style="position:absolute;left:1376px;top:124px;width:14px;height:14px;background:#f00;border:1px solid #222"></div>
<div class="t" style="left:1530px;top:111px;font-size:12px;color:#1e1e2e;">Group</div>
<svg style="position:absolute;left:0;top:0" width="1920" height="1080"><defs><linearGradient id="ug" x1="624" y1="0" x2="684" y2="0" gradientUnits="userSpaceOnUse"><stop offset="0" stop-color="#00009a"/><stop offset="0.25" stop-color="#0606cc"/><stop offset="0.47" stop-color="#3535f4"/><stop offset="0.68" stop-color="#5252ff"/><stop offset="0.85" stop-color="#3a3af6"/><stop offset="1" stop-color="#1c1ade"/></linearGradient></defs><path d="M624 309 H1045 A241 241 0 0 1 1045 791 H859 V753 H841 V791 H624 V731 H1045 A180.5 180.5 0 0 0 1045 370 H624 Z" fill="#1c1adc"/><rect x="624" y="309" width="60" height="61" fill="url(#ug)"/><rect x="624" y="731" width="60" height="60" fill="url(#ug)"/><path fill="none" d="M900 449.5 H996 M947.5 402 V498" stroke="#fff" stroke-width="1"/><rect x="944.5" y="446.5" width="6" height="6" fill="none" stroke="#3a4e6a" stroke-width="2.2" opacity="0.5"/><rect x="944.5" y="446.5" width="6" height="6" fill="none" stroke="#fff" stroke-width="1"/><rect x="49" y="900" width="6" height="49" fill="#5fbf5f"/><rect x="51" y="900" width="2" height="49" fill="#7ad07a"/><polygon points="49,900 52,896.5 55,900" fill="#4aa84a"/><path d="M49 886.5 L55.5 891.5 L61 887.5 M55.5 891.5 V897.5" stroke="#1aa01a" stroke-width="1.1" fill="none"/><rect x="54" y="946" width="46" height="6" fill="#d86060"/><rect x="54" y="946" width="46" height="2" fill="#e88080"/><rect x="54" y="950.5" width="46" height="1.5" fill="#904040"/><polygon points="100,946 103.5,949 100,952" fill="#c05050"/><path fill="none" d="M96.5 933.5 L107.5 944.5 M107.5 934.5 L96.5 945" stroke="#e03030" stroke-width="1.1"/><path d="M49 933.5 H62 L49 945.5 H61" stroke="#1a70f0" stroke-width="1.1" fill="none"/><rect x="49" y="946" width="5" height="6" fill="#80a8e0"/><ellipse cx="1834" cy="332.5" rx="68" ry="5.8" fill="none" stroke="#8d9db2" stroke-width="1.6"/><path fill="none" d="M1765 331 H1772 M1774 332 H1782 M1785 331 H1788 M1889 331 H1901 M1828 338 H1842" stroke="#e8ecf0" stroke-width="1.3"/><rect x="1809.5" y="278.5" width="51" height="51" fill="#c0c6ce" stroke="#6e747c" stroke-width="1"/><rect x="1819" y="288" width="32" height="32" fill="#b5bcc6"/><text x="1835" y="309" text-anchor="middle" font-family="Liberation Sans" font-weight="bold" font-size="13" fill="#575f6b" textLength="21" lengthAdjust="spacingAndGlyphs">TOP</text><rect x="1801.5" y="391.5" width="67" height="17" rx="4.5" fill="#b9c0d0" stroke="#a8b0c0" stroke-width="1"/><text x="1806" y="402.7" font-family="Liberation Sans" font-size="10.5" fill="#555c6a" textLength="43" lengthAdjust="spacingAndGlyphs">Unnamed</text><polygon points="1855.5,397.5 1863.5,397.5 1859.5,402.5" fill="#d0d6e0" stroke="#8a90a0" stroke-width="0.8"/><rect x="1882" y="433.5" width="32" height="211.5" rx="3.5" fill="#7b8aa1" stroke="#4b5a70" stroke-width="1.2"/><g stroke="#5f6e84" fill="none" stroke-width="1.1"><circle cx="1908" cy="439.5" r="2.8"/><path fill="none" d="M1906.5 438 L1909.5 441 M1909.5 438 L1906.5 441"/><path fill="none" d="M1897.5 454 A10 10 0 1 0 1907.5 464 V454 Z"/><circle cx="1897.5" cy="464" r="5.5"/><path fill="none" d="M1892 468 L1889 471 M1903 468 L1906 471"/><path fill="none" d="M1887 490 H1911 M1887 560 H1911" stroke="#6d7d94" stroke-width="0.8"/><path fill="none" d="M1891 515 Q1887 508 1889 505 L1892 509 V499 Q1893 497 1894.5 499 V505 V497 Q1896 495 1897.5 497 V505 V498 Q1899 496 1900.5 498 V506 V501 Q1902 499 1903.5 501 V511 Q1902 517 1897 518 Z"/><path fill="none" d="M1886 523 L1896 533 M1886 523 V528 M1886 523 H1891 M1902 523 L1886 539 M1902 523 H1897 M1902 523 V528 M1886 539 V534 M1886 539 H1891"/><circle cx="1901" cy="537" r="4.5"/><path fill="none" d="M1904.5 540.5 L1908 544" stroke-width="2"/><path fill="none" d="M1895 582 V566 H1893 L1897.5 561 L1902 566 H1900 V582 Z"/><ellipse cx="1897.5" cy="573" rx="10" ry="4"/><rect x="1886.5" y="603" width="5" height="5"/><rect x="1894.5" y="603" width="5" height="5"/><rect x="1902.5" y="603" width="5" height="5"/><rect x="1886.5" y="611" width="16" height="12"/><polygon points="1891,614 1898,617 1891,620" fill="#5f6e84"/><circle cx="1908" cy="638.5" r="2.8"/><path fill="none" d="M1906 638.5 H1910"/></g><polygon points="1895,483 1900,483 1897.5,486" fill="#5f6e84"/><polygon points="1895,552 1900,552 1897.5,555" fill="#5f6e84"/><polygon points="1895,591 1900,591 1897.5,594" fill="#5f6e84"/></svg>
<div class="t" style="left:6px;top:229.5px;font-size:12px;color:#eef0f4;">[−][Front][Realistic]</div>
<svg style="position:absolute;left:0;top:0" width="400" height="220"><path d="M9.5 171.5 H21 L24.5 175 V183.5 H9.5 Z" fill="#e8eaf0" stroke="#2a2e36" stroke-width="1.2" stroke-linejoin="round"/><path d="M21 171.5 V175 H24.5" fill="#fff" stroke="#2a2e36" stroke-width="0.8"/><path d="M33 174 H38 L39.5 175.5 H45 V177 H36 L33 183 Z" fill="#e8eaf0" stroke="#2a2e36" stroke-width="1.1" stroke-linejoin="round"/><path d="M36 177 H49 L45.5 182.5 H33 Z" fill="#c0c6d0" stroke="#2a2e36" stroke-width="1.1" stroke-linejoin="round"/><rect x="58.5" y="170.5" width="13.5" height="13" rx="1.2" fill="#56606e" stroke="#2a2e36" stroke-width="1"/><rect x="61" y="171.5" width="8.5" height="5" fill="#e6e8ee"/><rect x="62" y="179" width="6" height="4.5" fill="#f4f4f4"/><rect x="63" y="180" width="1.5" height="2.5" fill="#333"/><rect x="81.5" y="170.5" width="13.5" height="12" rx="1.2" fill="#56606e" stroke="#2a2e36" stroke-width="1"/><rect x="84" y="171.5" width="8.5" height="4.5" fill="#e6e8ee"/><rect x="85" y="178" width="5" height="4" fill="#f4f4f4"/><path fill="none" d="M90 184.5 L96.5 178" stroke="#3a2a10" stroke-width="3"/><path fill="none" d="M90 184.5 L96.5 178" stroke="#f0b030" stroke-width="1.8"/><rect x="105" y="175" width="15.5" height="7.5" rx="2" fill="#f0f0f0" stroke="#222" stroke-width="1.3"/><rect x="108" y="170.5" width="9.5" height="4.5" fill="#fff" stroke="#222" stroke-width="1.1"/><rect x="108" y="180" width="9.5" height="4" fill="#cfe2ee" stroke="#222" stroke-width="1.1"/><path d="M135 171 L129.5 175.5 L135 180 V177.5 H138 Q142 177.5 142 181 V182 H144 V180 Q144 173.5 138 173.5 H135 Z" fill="#fff" stroke="#222" stroke-width="1.2" stroke-linejoin="round"/><polygon points="152,176 157,176 154.5,179" fill="#444"/><path d="M174 171 L179.5 175.5 L174 180 V177.5 H171 Q167 177.5 167 181 V182 H165 V180 Q165 173.5 171 173.5 H174 Z" fill="#f4f4f4" stroke="#aaa" stroke-width="1.1" stroke-linejoin="round"/><polygon points="188.5,176 193.5,176 191,179" fill="#444"/><rect x="197.5" y="166.5" width="179" height="21" fill="linear-gradient(#fff,#eee)" stroke="#888" stroke-width="1"/></svg>
<div style="position:absolute;left:198px;top:167px;width:178px;height:20px;background:linear-gradient(#fafafa,#e4e4e4);border:1px solid #8c8c8c"></div>
<svg style="position:absolute;left:0;top:0" width="400" height="220"><g transform="translate(208,177)"><circle r="5" fill="none" stroke="#333" stroke-width="1.2"/><circle r="2.3" fill="none" stroke="#333" stroke-width="1"/><path fill="none" d="M0 -7.3 V-5 M0 5 V7.3 M-7.3 0 H-5 M5 0 H7.3 M-5.2 -5.2 L-3.5 -3.5 M3.5 3.5 L5.2 5.2 M-5.2 5.2 L-3.5 3.5 M3.5 -3.5 L5.2 -5.2" stroke="#333" stroke-width="2"/></g><polygon points="367.5,176 374,176 370.75,179.5" fill="#333"/><rect x="381" y="172" width="7" height="1.3" fill="#111"/><polygon points="381,174.5 388,174.5 384.5,179" fill="#111"/></svg>
<div class="t" style="left:219px;top:172px;font-size:12px;color:#111;">3D Modeling</div>
<svg style="position:absolute;left:0;top:0" width="400" height="222"><path d="M17 216 Q21 215 23 208 L26 197 Q27 192.5 32 192.5 H158 Q163 192.5 165 197 L169 208 Q171 215 176 216 Z" fill="#d9d9d9" stroke="#8e8e8e" stroke-width="1"/><path d="M17 216 Q21 215 23 208 L26 197 Q27 192.5 32 192.5 H158 Q163 192.5 165 197 L169 208 Q171 215 176 216" fill="url(#tg1)" stroke="#8e8e8e" stroke-width="1"/><defs><linearGradient id="tg1" x1="0" y1="0" x2="0" y2="1"><stop offset="0" stop-color="#e8e8e8"/><stop offset="1" stop-color="#bdbdbd"/></linearGradient><linearGradient id="tg2" x1="0" y1="0" x2="0" y2="1"><stop offset="0" stop-color="#c2c2c2"/><stop offset="1" stop-color="#a6a6a6"/></linearGradient></defs><path d="M166 216 Q170.5 215 171.5 208 L173 198.5 Q174.5 193 180 193 H339 Q344 193 346 198 L349 208 Q351 215 356 216" fill="url(#tg2)" stroke="#d4d4d4" stroke-width="1"/><path fill="none" d="M148.5 200.5 L154.5 206.5 M154.5 200.5 L148.5 206.5" stroke="#9a9a9a" stroke-width="1.8"/><path d="M356 196.5 H368 Q373 196.5 375 200.5 L377.5 207.5 Q378.5 211 374.5 211 H361 Q358 211 357.5 208 Z" fill="#9c9c9c" stroke="#6a6a6a" stroke-width="1.1"/><circle cx="366.5" cy="204" r="3.6" fill="#bdbdbd"/><path fill="none" d="M366.5 201.3 V206.7 M363.8 204 H369.2" stroke="#e8e8e8" stroke-width="1.6"/></svg>
<div class="t" style="left:32px;top:198px;font-size:12px;color:#111;">smart-watch-stand*</div>
<div class="t" style="left:178px;top:198px;font-size:12px;color:#555;">smart-watch-stand - kopie</div>
<svg style="position:absolute;left:0;top:0" width="400" height="1080"><rect x="2" y="1001" width="14" height="14" fill="#f4f4f4" stroke="#b8b8b8"/><rect x="17" y="1001" width="14" height="14" fill="#f4f4f4" stroke="#b8b8b8"/><rect x="32" y="1001" width="14" height="14" fill="#f4f4f4" stroke="#b8b8b8"/><rect x="47" y="1001" width="14" height="14" fill="#f4f4f4" stroke="#b8b8b8"/><rect x="5.5" y="1004" width="1.4" height="8" fill="#555"/><polygon points="13,1004 7.5,1008 13,1012" fill="#555"/><polygon points="28,1004 22.5,1008 28,1012" fill="#555"/><polygon points="36.5,1004 42,1008 36.5,1012" fill="#555"/><polygon points="51,1004 56.5,1008 51,1012" fill="#555"/><rect x="57" y="1004" width="1.4" height="8" fill="#555"/><polygon points="62,1000 115,1000 110,1016.5 67.5,1016.5" fill="#7b8ca6"/><path fill="none" d="M62 1000 L67.5 1016.5" stroke="#555" stroke-width="1"/><path d="M110 1016.5 L115.5 1000 M165 1016.5 L170.5 1000 M220 1016.5 L225.5 1000" stroke="#555" stroke-width="1" fill="none"/><path d="M113 1016 Q114 1013 116 1012 M168 1016 Q169 1013 171 1012" stroke="#888" stroke-width="0.8" fill="none"/></svg>
<div class="t" style="left:74px;top:1004px;font-size:12px;color:#e4eaf2;">Model</div>
<div class="t" style="left:120px;top:1004px;font-size:12px;color:#111;letter-spacing:-0.3px">Layout1</div>
<div class="t" style="left:175.5px;top:1004px;font-size:12px;color:#111;letter-spacing:-0.3px">Layout2</div>
<div class="t" style="left:12.5px;top:1024.5px;font-size:12.5px;color:#111;transform:scaleX(0.82);transform-origin:0 0">2160.7531, 5.6631&nbsp;&nbsp;&nbsp;&nbsp;&nbsp;, 0.0000</div>
<div style="position:absolute;left:179px;top:1018px;width:37px;height:22px;background:linear-gradient(#c8c8c8,#a9a9a9);border-left:1px solid #5a5a5a;border-right:1px solid #dcdcdc"></div>
<div class="t" style="left:179px;top:1024px;width:37px;text-align:center;font-size:12.5px;color:#161640;transform:scaleX(0.85)">INFER</div>
<div style="position:absolute;left:217px;top:1018px;width:34px;height:22px;background:linear-gradient(#c8c8c8,#a9a9a9);border-left:1px solid #5a5a5a;border-right:1px solid #dcdcdc"></div>
<div class="t" style="left:217px;top:1024px;width:34px;text-align:center;font-size:12.5px;color:#161640;transform:scaleX(0.85)">SNAP</div>
<div style="position:absolute;left:251px;top:1018px;width:33px;height:22px;background:linear-gradient(#c8c8c8,#a9a9a9);border-left:1px solid #5a5a5a;border-right:1px solid #dcdcdc"></div>
<div class="t" style="left:251px;top:1024px;width:33px;text-align:center;font-size:12.5px;color:#161640;transform:scaleX(0.85)">GRID</div>
<div style="position:absolute;left:285px;top:1018px;width:44px;height:22px;background:linear-gradient(#d6eef8,#9fd3e6);border-left:1px solid #5a5a5a;border-right:1px solid #dcdcdc"></div>
<div class="t" style="left:285px;top:1024px;width:44px;text-align:center;font-size:12.5px;color:#161640;transform:scaleX(0.85)">ORTHO</div>
<div style="position:absolute;left:330px;top:1018px;width:41px;height:22px;background:linear-gradient(#c8c8c8,#a9a9a9);border-left:1px solid #5a5a5a;border-right:1px solid #dcdcdc"></div>
<div class="t" style="left:330px;top:1024px;width:41px;text-align:center;font-size:12.5px;color:#161640;transform:scaleX(0.85)">POLAR</div>
<div style="position:absolute;left:372px;top:1018px;width:42px;height:22px;background:linear-gradient(#d6eef8,#9fd3e6);border-left:1px solid #5a5a5a;border-right:1px solid #dcdcdc"></div>
<div class="t" style="left:372px;top:1024px;width:42px;text-align:center;font-size:12.5px;color:#161640;transform:scaleX(0.85)">OSNAP</div>
<div style="position:absolute;left:415px;top:1018px;width:56px;height:22px;background:linear-gradient(#c8c8c8,#a9a9a9);border-left:1px solid #5a5a5a;border-right:1px solid #dcdcdc"></div>
<div class="t" style="left:415px;top:1024px;width:56px;text-align:center;font-size:12.5px;color:#161640;transform:scaleX(0.85)">3DOSNAP</div>
<div style="position:absolute;left:472px;top:1018px;width:49px;height:22px;background:linear-gradient(#c8c8c8,#a9a9a9);border-left:1px solid #5a5a5a;border-right:1px solid #dcdcdc"></div>
<div class="t" style="left:472px;top:1024px;width:49px;text-align:center;font-size:12.5px;color:#161640;transform:scaleX(0.85)">OTRACK</div>
<div style="position:absolute;left:522px;top:1018px;width:36px;height:22px;background:linear-gradient(#d6eef8,#9fd3e6);border-left:1px solid #5a5a5a;border-right:1px solid #dcdcdc"></div>
<div class="t" style="left:522px;top:1024px;width:36px;text-align:center;font-size:12.5px;color:#161640;transform:scaleX(0.85)">DUCS</div>
<div style="position:absolute;left:559px;top:1018px;width:27px;height:22px;background:linear-gradient(#d6eef8,#9fd3e6);border-left:1px solid #5a5a5a;border-right:1px solid #dcdcdc"></div>
<div class="t" style="left:559px;top:1024px;width:27px;text-align:center;font-size:12.5px;color:#161640;transform:scaleX(0.85)">DYN</div>
<div style="position:absolute;left:587px;top:1018px;width:29px;height:22px;background:linear-gradient(#d6eef8,#9fd3e6);border-left:1px solid #5a5a5a;border-right:1px solid #dcdcdc"></div>
<div class="t" style="left:587px;top:1024px;width:29px;text-align:center;font-size:12.5px;color:#161640;transform:scaleX(0.85)">LWT</div>
<div style="position:absolute;left:617px;top:1018px;width:25px;height:22px;background:linear-gradient(#c8c8c8,#a9a9a9);border-left:1px solid #5a5a5a;border-right:1px solid #dcdcdc"></div>
<div class="t" style="left:617px;top:1024px;width:25px;text-align:center;font-size:12.5px;color:#161640;transform:scaleX(0.85)">TPY</div>
<div style="position:absolute;left:643px;top:1018px;width:21px;height:22px;background:linear-gradient(#c8c8c8,#a9a9a9);border-left:1px solid #5a5a5a;border-right:1px solid #dcdcdc"></div>
<div class="t" style="left:643px;top:1024px;width:21px;text-align:center;font-size:12.5px;color:#161640;transform:scaleX(0.85)">QP</div>
<div style="position:absolute;left:665px;top:1018px;width:19px;height:22px;background:linear-gradient(#c8c8c8,#a9a9a9);border-left:1px solid #5a5a5a;border-right:1px solid #dcdcdc"></div>
<div class="t" style="left:665px;top:1024px;width:19px;text-align:center;font-size:12.5px;color:#161640;transform:scaleX(0.85)">SC</div>
<div style="position:absolute;left:685px;top:1018px;width:22px;height:22px;background:linear-gradient(#c8c8c8,#a9a9a9);border-left:1px solid #5a5a5a;border-right:1px solid #dcdcdc"></div>
<div class="t" style="left:685px;top:1024px;width:22px;text-align:center;font-size:12.5px;color:#161640;transform:scaleX(0.85)">AM</div>
<div style="position:absolute;left:707px;top:1018px;width:1px;height:22px;background:#5a5a5a"></div>
<div style="position:absolute;left:1567px;top:1018px;width:43px;height:22px;background:linear-gradient(#c8c8c8,#a9a9a9);border-left:1px solid #6a6a6a;border-right:1px solid #dcdcdc"></div>
<div class="t" style="left:1567px;top:1024px;width:43px;text-align:center;font-size:12.5px;color:#161640;transform:scaleX(0.85)">MODEL</div>
<div style="position:absolute;left:1610px;top:1018px;width:22px;height:22px;background:linear-gradient(#c8c8c8,#a9a9a9);border-left:1px solid #6a6a6a;border-right:1px solid #dcdcdc"></div>
<div style="position:absolute;left:1632px;top:1018px;width:23px;height:22px;background:linear-gradient(#c8c8c8,#a9a9a9);border-left:1px solid #6a6a6a;border-right:1px solid #dcdcdc"></div>
<div style="position:absolute;left:1666px;top:1018px;width:51px;height:22px;background:linear-gradient(#c8c8c8,#a9a9a9);border-left:1px solid #6a6a6a;border-right:1px solid #dcdcdc"></div>
<div style="position:absolute;left:1717px;top:1018px;width:23px;height:22px;background:linear-gradient(#c8c8c8,#a9a9a9);border-left:1px solid #6a6a6a;border-right:1px solid #dcdcdc"></div>
<div style="position:absolute;left:1740px;top:1018px;width:21px;height:22px;background:linear-gradient(#c8c8c8,#a9a9a9);border-left:1px solid #6a6a6a;border-right:1px solid #dcdcdc"></div>
<div style="position:absolute;left:1767px;top:1018px;width:23px;height:22px;background:linear-gradient(#c8c8c8,#a9a9a9);border-left:1px solid #6a6a6a;border-right:1px solid #dcdcdc"></div>
<div style="position:absolute;left:1790px;top:1018px;width:22px;height:22px;background:linear-gradient(#c8c8c8,#a9a9a9);border-left:1px solid #6a6a6a;border-right:1px solid #dcdcdc"></div>
<div style="position:absolute;left:1812px;top:1018px;width:22px;height:22px;background:linear-gradient(#c8c8c8,#a9a9a9);border-left:1px solid #6a6a6a;border-right:1px solid #dcdcdc"></div>
<div style="position:absolute;left:1834px;top:1018px;width:51px;height:22px;background:linear-gradient(#c8c8c8,#a9a9a9);border-left:1px solid #6a6a6a;border-right:1px solid #dcdcdc"></div>
<div style="position:absolute;left:1885px;top:1018px;width:12px;height:22px;background:linear-gradient(#c8c8c8,#a9a9a9);border-left:1px solid #6a6a6a;border-right:1px solid #dcdcdc"></div>
<div style="position:absolute;left:1897px;top:1018px;width:21px;height:22px;background:linear-gradient(#c8c8c8,#a9a9a9);border-left:1px solid #6a6a6a;border-right:1px solid #dcdcdc"></div>
<svg style="position:absolute;left:0;top:0" width="1920" height="1080"><rect x="1614" y="1022" width="14" height="11" fill="#f0f0f0" stroke="#333"/><path d="M1617 1031 V1024 L1623 1031 Z" fill="none" stroke="#333"/><rect x="1613" y="1034.5" width="16" height="1.5" fill="#444"/><rect x="1636" y="1022" width="7" height="8" fill="#f0f0f0" stroke="#333"/><rect x="1644" y="1022" width="7" height="8" fill="#f0f0f0" stroke="#333"/><rect x="1635" y="1032" width="17" height="2.5" rx="1" fill="#444"/><g transform="translate(1677,1029)"><path d="M0 -8.5 Q2.5 -3 2 0.5 Q6 2.5 8.5 6.5 Q3.5 5.5 0 3.5 Q-3.5 5.5 -8.5 6.5 Q-6 2.5 -2 0.5 Q-2.5 -3 0 -8.5 Z" fill="#fff" stroke="#333" stroke-width="0.9"/></g><polygon points="1705,1025 1712,1025 1708.5,1029" fill="#111"/><g transform="translate(1727,1029)"><path d="M0 -8.5 Q2.5 -3 2 0.5 Q6 2.5 8.5 6.5 Q3.5 5.5 0 3.5 Q-3.5 5.5 -8.5 6.5 Q-6 2.5 -2 0.5 Q-2.5 -3 0 -8.5 Z" fill="#fff" stroke="#333" stroke-width="0.9"/><circle cx="5" cy="2" r="2.5" fill="#f8a020"/></g><g transform="translate(1749,1029)"><path d="M0 -8.5 Q2.5 -3 2 0.5 Q6 2.5 8.5 6.5 Q3.5 5.5 0 3.5 Q-3.5 5.5 -8.5 6.5 Q-6 2.5 -2 0.5 Q-2.5 -3 0 -8.5 Z" fill="none" stroke="#888" stroke-width="0.9"/></g><g transform="translate(1778,1029)"><circle r="5.5" fill="none" stroke="#333" stroke-width="1.6"/><circle r="2.5" fill="#eee" stroke="#333" stroke-width="1.1"/><path fill="none" d="M0 -8 V-6 M0 6 V8 M-8 0 H-6 M6 0 H8 M-5.6 -5.6 L-4.3 -4.3 M4.3 4.3 L5.6 5.6 M-5.6 5.6 L-4.3 4.3 M4.3 -4.3 L5.6 -5.6" stroke="#333" stroke-width="2.2"/><polygon points="3,7 7,3 7,7" fill="#111"/></g><rect x="1793" y="1027" width="12" height="9" rx="1" fill="#fff" stroke="#333" stroke-width="1.2"/><path d="M1801 1027 V1023 A3.5 3.5 0 0 1 1808 1023 V1025" fill="none" stroke="#333" stroke-width="1.4"/><rect x="1797" y="1029.5" width="1.4" height="4" fill="#333"/><circle cx="1821" cy="1029" r="6" fill="#999" stroke="#777"/><path fill="none" d="M1821 1029 L1824 1024" stroke="#eee" stroke-width="1.2"/><rect x="1836" y="1021" width="47" height="16" fill="#9a9a9a" stroke="#666"/><rect x="1838" y="1022" width="20" height="14" fill="#aaa"/><rect x="1840" y="1023" width="11" height="11" fill="#5a8ad0"/><rect x="1840" y="1029" width="12" height="6" fill="#f0c040"/><path d="M1845 1032 L1848 1035 L1853 1029" stroke="#20a020" stroke-width="1.8" fill="none"/><path d="M1866 1036 V1033 Q1862 1030 1862 1026.5 A4.5 4.5 0 0 1 1871 1026.5 Q1871 1030 1868 1033 V1036 Z" fill="#f8e8a0" stroke="#555" stroke-width="0.9"/><polygon points="1888,1028 1895,1028 1891.5,1032" fill="#111"/><rect x="1900.5" y="1022.5" width="13" height="13" rx="1" fill="#e8eaee" stroke="#444" stroke-width="1"/><rect x="1901" y="1023" width="12" height="2" fill="#555"/><circle cx="1908.5" cy="1024" r="0.6" fill="#eee"/><circle cx="1910.5" cy="1024" r="0.6" fill="#eee"/><circle cx="1912.5" cy="1024" r="0.6" fill="#eee"/></svg>
<svg style="position:absolute;left:0;top:0" width="1920" height="1080"><polygon points="16,1053.5 22.5,1052.5 22.5,1059.5 16,1059.5" fill="#fff"/><polygon points="24,1052.3 32,1051 32,1059.5 24,1059.5" fill="#fff"/><polygon points="16,1061 22.5,1061 22.5,1068 16,1067" fill="#fff"/><polygon points="24,1061 32,1061 32,1069.5 24,1068.3" fill="#fff"/><circle cx="75" cy="1058" r="6.2" fill="none" stroke="#fff" stroke-width="1.4"/><path fill="none" d="M70.5 1062.5 L64 1069" stroke="#fff" stroke-width="1.6"/><defs><radialGradient id="ffg" cx="0.45" cy="0.35" r="0.7"><stop offset="0" stop-color="#ffb020"/><stop offset="0.6" stop-color="#ff6a1a"/><stop offset="1" stop-color="#f0305a"/></radialGradient></defs><circle cx="122.5" cy="1061" r="11.3" fill="url(#ffg)"/><path d="M122 1049.5 Q130 1047 133 1056 Q131 1052 127 1051 Z" fill="#ffd030"/><path d="M113 1054 Q114 1049 118 1048 Q116 1052 117 1054 Z" fill="#ffb030"/><circle cx="124" cy="1060.5" r="5.2" fill="#7a3ae0"/><path d="M116 1058 Q120 1054 126 1055 Q121 1057 120 1060 Z" fill="#ff9a20"/><polygon points="160,1050 170,1048 170,1071 160,1069" fill="#0a64c8"/><rect x="169" y="1053" width="13" height="11" fill="#1a88e8"/><path d="M170 1054 L175.5 1059 L181 1054" stroke="#fff" stroke-width="1.3" fill="none"/><ellipse cx="165" cy="1059.5" rx="3" ry="4" fill="none" stroke="#fff" stroke-width="1.6"/><path d="M209 1052 H216 L218 1054 H231 V1067 H209 Z" fill="#f0c040"/><rect x="209" y="1055" width="22" height="12" fill="#ffd860"/><path d="M215 1068 V1063 H225 V1068" stroke="#2a8ae0" stroke-width="2.6" fill="none"/><rect x="259" y="1050" width="21" height="21" fill="#d8c050"/><path fill="none" d="M257 1049 L262 1052 M282 1049 L277 1052 M257 1072 L262 1069 M282 1072 L277 1069" stroke="#f4e8a0" stroke-width="1.5"/><text x="269.5" y="1066" text-anchor="middle" font-family="Liberation Sans" font-size="15" font-weight="bold" fill="#5a4a20">R</text><defs><linearGradient id="edg" x1="0" y1="0" x2="1" y2="1"><stop offset="0" stop-color="#30c8e8"/><stop offset="0.5" stop-color="#1a90d8"/><stop offset="1" stop-color="#0a50a8"/></linearGradient></defs><circle cx="319" cy="1061" r="12" fill="url(#edg)"/><path d="M314 1051 Q326 1046 331 1058 Q331 1065 324 1066 Q319 1066 318 1062 Q322 1063 324 1060 Q324 1055 316 1055 Z" fill="#50d070"/><path d="M319 1057 Q311 1058 312 1066 Q314 1072 322 1073 Q315 1070 315 1064 Q315 1059 321 1058 Z" fill="#0a3a90"/><polygon points="357,1064 368,1059 380,1064 368,1070" fill="#2a90e0"/><polygon points="357,1061 368,1056 380,1061 368,1067" fill="#e02a2a"/><polygon points="357,1058 368,1053 380,1058 368,1064" fill="#f0d020"/><polygon points="357,1055 368,1050 380,1055 368,1061" fill="#5ad040"/><ellipse cx="369" cy="1055" rx="4.5" ry="2.6" fill="#e070c0"/><ellipse cx="369" cy="1055" rx="2" ry="1.2" fill="#222"/><circle cx="417" cy="1060" r="11" fill="#8ed020"/><rect x="411" y="1056" width="12" height="8" rx="2" fill="none" stroke="#fff" stroke-width="1.8"/><path fill="none" d="M414 1060 H420 M417 1056 V1064" stroke="#fff" stroke-width="1.4"/><path d="M455 1050 Q465.5 1046 476 1050 Q478 1063 465.5 1072 Q453 1063 455 1050 Z" fill="#f06a20"/><path d="M457 1051.5 Q465.5 1048.5 474 1051.5 Q475.5 1062 465.5 1069.5 Q455.5 1062 457 1051.5 Z" fill="#3a1a10"/><text x="465.5" y="1065" text-anchor="middle" font-family="Liberation Sans" font-size="13" font-weight="bold" fill="#f07a30">G</text><rect x="506" y="1049" width="17" height="22" rx="1.5" fill="#6a7a8a"/><rect x="508" y="1051" width="13" height="4" fill="#6ac8f0"/><g fill="#cfd8e0"><rect x="508" y="1057" width="3.5" height="3"/><rect x="513" y="1057" width="3.5" height="3"/><rect x="508" y="1061.5" width="3.5" height="3"/><rect x="513" y="1061.5" width="3.5" height="3"/><rect x="508" y="1066" width="3.5" height="3"/><rect x="513" y="1066" width="3.5" height="3"/></g><rect x="518" y="1057" width="3.5" height="12" fill="#1a4a80"/><path fill="none" d="M555 1056 H572 M555 1063 H572" stroke="#fff" stroke-width="1.6"/><polygon points="555,1052 550,1056 555,1060" fill="#000" stroke="#fff" stroke-width="1.2"/><polygon points="572,1059 577,1063 572,1067" fill="#000" stroke="#fff" stroke-width="1.2"/><rect x="601" y="1049" width="23" height="22" rx="2.5" fill="#f07818"/><rect x="605" y="1055" width="15" height="11" rx="1.5" fill="none" stroke="#ffe0c0" stroke-width="1.5"/><circle cx="612.5" cy="1060.5" r="3" fill="none" stroke="#ffe0c0" stroke-width="1.4"/><rect x="638" y="1040" width="47" height="40" fill="#101a6e"/><rect x="638" y="1078" width="47" height="2" fill="#9a98d8"/><rect x="650" y="1049" width="24" height="23" fill="#e44a50"/><rect x="650" y="1049" width="24" height="23" fill="url(#acg)"/><defs><linearGradient id="acg" x1="0" y1="0" x2="1" y2="1"><stop offset="0" stop-color="#fff" stop-opacity="0.5"/><stop offset="0.5" stop-color="#fff" stop-opacity="0"/><stop offset="1" stop-color="#fff" stop-opacity="0.4"/></linearGradient></defs><polygon points="662,1051 671,1068 667,1068 662,1059 657,1068 653,1068" fill="#9a1010"/><rect x="704" y="1051" width="15" height="18" fill="#fff" stroke="#1a7a40" stroke-width="1.2"/><path fill="none" d="M711 1055 H718 M711 1059 H718 M711 1063 H718 M714 1052 V1068" stroke="#1a7a40" stroke-width="1"/><polygon points="699,1050 711,1048 711,1072 699,1070" fill="#1a6a3a"/><text x="705" y="1064" text-anchor="middle" font-family="Liberation Sans" font-size="10" font-weight="bold" fill="#fff">X</text><path d="M750 1054 Q760 1050 768 1056 Q770 1066 759 1071 Q752 1066 750 1054 Z" fill="#d84040"/><path d="M752 1052 Q756 1049 760 1051 Q764 1048 767 1052" stroke="#40a040" stroke-width="2" fill="none"/><rect x="798" y="1050" width="22" height="22" rx="1.5" fill="none" stroke="#fff" stroke-width="1.5"/><rect x="798" y="1058" width="6" height="14" fill="none" stroke="#fff" stroke-width="1.5"/><polygon points="811,1060 816,1068 806,1068" fill="none" stroke="#fff" stroke-width="1.4"/><rect x="103" y="1078" width="40" height="2" fill="#8c8acc"/><rect x="201" y="1078" width="40" height="2" fill="#8c8acc"/><rect x="348" y="1078" width="40" height="2" fill="#8c8acc"/><rect x="593" y="1078" width="40" height="2" fill="#8c8acc"/><rect x="691" y="1078" width="40" height="2" fill="#8c8acc"/><rect x="744" y="1078" width="36" height="2" fill="#8c8acc"/><rect x="789" y="1078" width="40" height="2" fill="#8c8acc"/></svg>
<div class="t" style="left:1875px;top:1046px;font-size:12px;color:#fff;transform:scaleX(0.88);transform-origin:0 0">16:27</div>
<div class="t" style="left:1687px;top:1024px;font-size:12.5px;color:#161640;transform:scaleX(0.9);transform-origin:0 0">1:1</div>
<div class="t" style="left:1865px;top:1063px;font-size:12px;color:#fff;transform:scaleX(0.92);transform-origin:0 0">2-1-2024</div>
<div style="position:absolute;left:1312px;top:0px;width:444px;height:24px;background:linear-gradient(#f4f4f4,#d9d9d9);border:1px solid #555;border-top:none"></div>
<div style="position:absolute;left:1313px;top:0px;width:13px;height:23px;background:linear-gradient(#f2f2f2,#dadada);border-right:1px solid #aaa"></div>
<div style="position:absolute;left:1327px;top:1px;width:178px;height:22px;background:#f4f4f4;border:1px solid #c4c4c4"></div>
<div class="t" style="left:1330px;top:7px;font-size:11px;color:#888;font-style:italic">Type a keyword or phrase</div>
<svg style="position:absolute;left:0;top:0" width="1920" height="30"><polygon points="1317,8 1321,12 1317,16" fill="#111"/><g fill="#eee" stroke="#222" stroke-width="1.1"><rect x="1510.5" y="10" width="5" height="9" rx="1"/><rect x="1517.5" y="10" width="5" height="9" rx="1"/><rect x="1511.5" y="5" width="3.5" height="6"/><rect x="1518" y="5" width="3.5" height="6"/></g><circle cx="1541.5" cy="10" r="4" fill="#fff" stroke="#333" stroke-width="1.1"/><path d="M1534 20 Q1535 14 1541.5 14 Q1548 14 1549 20 Z" fill="#fff" stroke="#333" stroke-width="1.1"/><polygon points="1638,11 1644,11 1641,14" fill="#333"/><path d="M1656 6 H1660 L1663 10 L1666 6 H1669 L1665 12 L1669 18 H1665.5 L1663 14 L1660 18 H1656.5 L1661 12 Z" fill="#3060c0" stroke="#1a3a80" stroke-width="0.8"/><path d="M1686 5 L1693 17 H1679 Z" fill="none" stroke="#2050b0" stroke-width="2"/><circle cx="1686" cy="5" r="2" fill="#fff" stroke="#2050b0" stroke-width="1.4"/><circle cx="1679" cy="17" r="2" fill="#fff" stroke="#2050b0" stroke-width="1.4"/><circle cx="1693" cy="17" r="2" fill="#fff" stroke="#2050b0" stroke-width="1.4"/><polygon points="1698,11 1704,11 1701,14" fill="#333"/><rect x="1714" y="3" width="1" height="17" fill="#bbb"/><circle cx="1732" cy="12" r="7.5" fill="#fff" stroke="#222" stroke-width="1.2"/><text x="1732" y="16.5" text-anchor="middle" font-family="Liberation Sans" font-size="12" font-weight="bold" fill="#1a4ac0">?</text><polygon points="1746,11 1752,11 1749,14" fill="#333"/><path fill="none" d="M1799 11.5 H1809" stroke="#888" stroke-width="1"/><rect x="1844.5" y="8.5" width="7" height="7" fill="#fff" stroke="#888"/><path d="M1846.5 8.5 V6.5 H1853.5 V13.5 H1851.5" fill="none" stroke="#888"/><path fill="none" d="M1890 6 L1900 16 M1900 6 L1890 16" stroke="#888" stroke-width="1"/></svg>
<div class="t" style="left:1555px;top:8px;font-size:12px;color:#111;">Sign In</div></body></html>
